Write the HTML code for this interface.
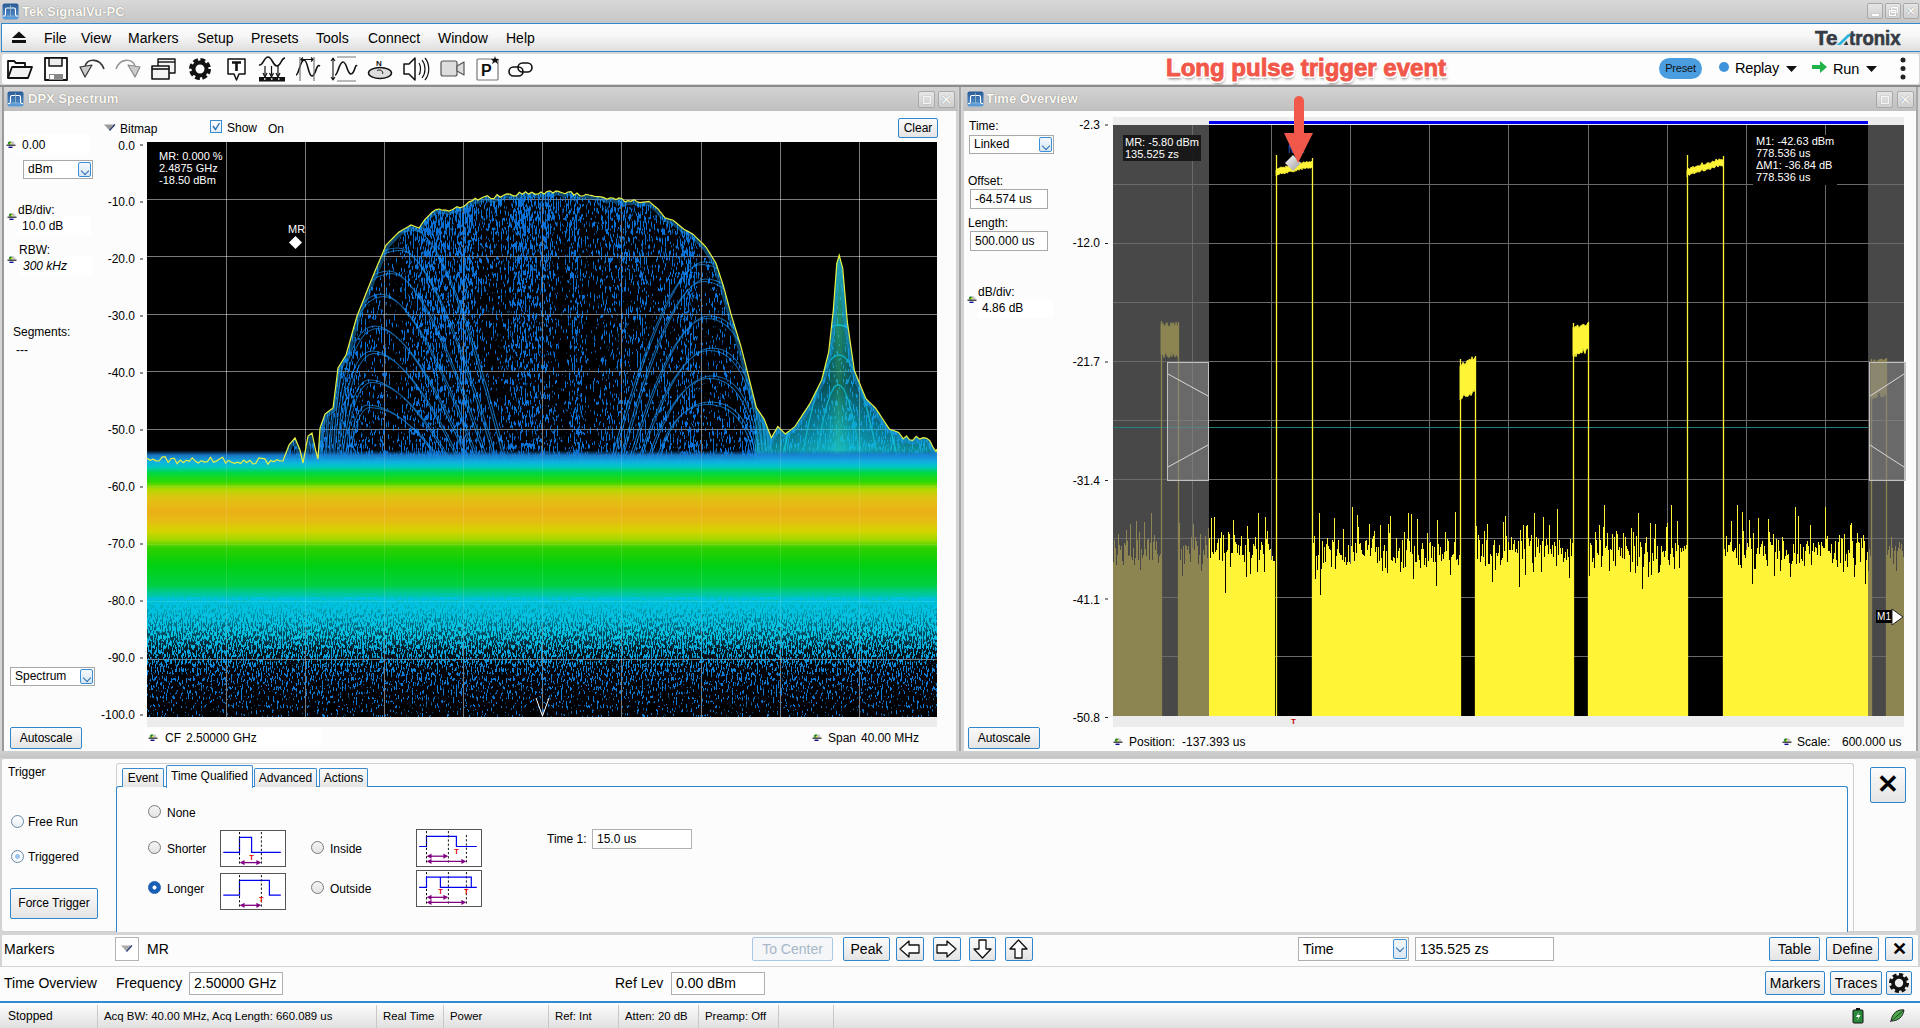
<!DOCTYPE html><html><head><meta charset="utf-8"><style>*{margin:0;padding:0;box-sizing:border-box}
html,body{width:1920px;height:1028px;overflow:hidden;background:#d4d4d4;font-family:"Liberation Sans",sans-serif;color:#000}
.a{position:absolute}
.t{position:absolute;white-space:nowrap;line-height:16px}
svg{position:absolute;overflow:visible}
#title{left:0;top:0;width:1920px;height:23px;background:linear-gradient(#d8d8d8,#c6c6c6)}
#menu{left:1px;top:23px;width:1919px;height:29px;border:1px solid #2f8ad0;border-right:none;background:linear-gradient(#fdfdfd 0%,#f6f6f6 45%,#dedede 100%)}
#tool{left:1px;top:53px;width:1919px;height:32px;background:#fdfdfd;border:1px solid #d8d8d8;border-radius:3px}
.ph{height:24px;background:linear-gradient(#d3d3d3,#bfbfbf)}
.ptitle{color:#fbf9f2;font-weight:bold;font-size:13px;text-shadow:0 0 1px #8a8a8a,0 0 1px #999}
.body{background:#fcfcfc}
.btn{position:absolute;border:1px solid #2f86cc;border-radius:2px;background:linear-gradient(#fbfbfb,#e4e4e4);font-size:13px;text-align:center;line-height:20px;white-space:nowrap}
.fld{position:absolute;border:1px solid #a8a8a8;background:#fff;font-size:13px;line-height:18px;padding-left:4px;white-space:nowrap}
.s11{font-size:11px}.s12{font-size:12px}.s13{font-size:13px}.s14{font-size:14px}.s15{font-size:15px}
.wbtn{position:absolute;border:1px solid #a9a9a9;border-radius:2px;background:linear-gradient(#e6e6e6,#cfcfcf)}
.dd{position:absolute;border:1px solid #a8a8a8;background:#fff;font-size:13px;line-height:17px;padding-left:4px;white-space:nowrap}
.ddb{position:absolute;right:1px;top:1px;bottom:1px;width:13px;border:1px solid #3b8fd6;border-radius:2px;background:linear-gradient(#f4f8fc,#d8e6f2)}
.ddb:after{content:"";position:absolute;left:3px;top:5px;width:5px;height:5px;border-right:1.3px solid #2a6fb0;border-bottom:1.3px solid #2a6fb0;transform:rotate(45deg)}
</style></head><body>
<div id="title" class="a"></div>
<svg style="left:2px;top:3px" width="17" height="17" viewBox="0 0 17 17"><defs><linearGradient id="icg" x1="0" y1="0" x2="0" y2="1"><stop offset="0" stop-color="#2a5a94"/><stop offset="0.75" stop-color="#4a84c4"/><stop offset="0.76" stop-color="#5a9ad8"/><stop offset="1" stop-color="#5a9ad8"/></linearGradient></defs><rect x="0.5" y="0.5" width="16" height="16" rx="2" fill="url(#icg)"/><path d="M1,13 H2.5 Q3.5,13 3.5,10.5 V6.5 Q3.5,5 5,5 H12 Q13.5,5 13.5,6.5 V10.5 Q13.5,13 14.5,13 H16" stroke="#fff" stroke-width="1.1" fill="none"/><path d="M8.5,2 V13 M5,13 H12" stroke="#9bc" stroke-width="0.8"/></svg>
<div class="t ptitle" style="left:22px;top:4px;line-height:16px">Tek SignalVu-PC</div>
<div class="wbtn" style="left:1867px;top:3px;width:16px;height:16px"><div class="a" style="left:4px;top:10px;width:7px;height:2px;background:#fff;box-shadow:0 0 1px #888"></div></div>
<div class="wbtn" style="left:1885px;top:3px;width:16px;height:16px"><div class="a" style="left:5px;top:3px;width:7px;height:6px;border:1px solid #fff;box-shadow:0 0 1px #888"></div><div class="a" style="left:3px;top:6px;width:7px;height:6px;border:1px solid #fff;box-shadow:0 0 1px #888"></div></div>
<div class="wbtn" style="left:1903px;top:3px;width:16px;height:16px;font-size:14px;line-height:14px;color:#fff;text-align:center;text-shadow:0 0 1px #666">&#x2715;</div>
<div id="menu" class="a"></div>
<svg style="left:11px;top:31px" width="16" height="13" viewBox="0 0 16 13"><path d="M8,0.5 L15,7 H1 Z" fill="#111"/><rect x="1" y="9" width="14" height="3" fill="#111"/></svg>
<div class="t s14" style="left:44px;top:30px">File</div>
<div class="t s14" style="left:81px;top:30px">View</div>
<div class="t s14" style="left:128px;top:30px">Markers</div>
<div class="t s14" style="left:197px;top:30px">Setup</div>
<div class="t s14" style="left:251px;top:30px">Presets</div>
<div class="t s14" style="left:316px;top:30px">Tools</div>
<div class="t s14" style="left:368px;top:30px">Connect</div>
<div class="t s14" style="left:438px;top:30px">Window</div>
<div class="t s14" style="left:506px;top:30px">Help</div>
<svg style="left:1810px;top:26px" width="100" height="24" viewBox="1810 26 100 24"><g font-family="Liberation Sans" font-weight="bold" font-size="19.5" fill="#363b44" stroke="#363b44" stroke-width="0.6"><text x="1815" y="44.9" textLength="22.5" lengthAdjust="spacingAndGlyphs">Te</text><text x="1849" y="44.9" textLength="51.6" lengthAdjust="spacingAndGlyphs">tronix</text></g><path d="M1836.8,44.9 L1847.8,34.3 L1851.7,34.3 L1840.6,44.9 Z" fill="#2ab4dc"/><path d="M1843.6,44.9 L1846.4,40.8 L1848.4,44.9 Z" fill="#363b44"/></svg>
<div id="tool" class="a"></div>
<svg style="left:0;top:50px" width="540" height="40" viewBox="0 50 540 40" fill="none" stroke="#111" stroke-width="1.8" stroke-linejoin="round">
<!-- folder -->
<path d="M8,78 V61 H14 L16,63 H25 V67" /><path d="M8,78 L12,67 H32 L28,78 Z" fill="#f2f2f2"/>
<!-- save -->
<rect x="45" y="58" width="22" height="22" fill="#fff"/><rect x="49" y="58" width="13" height="8" fill="#eee" stroke-width="1.5"/><rect x="49" y="74" width="14" height="6" fill="#888" stroke="none"/><rect x="50" y="75" width="4" height="4" fill="#fff" stroke="none"/>
<!-- undo -->
<path d="M104,69 C100,58 88,58 85,66" stroke="#333" stroke-width="1.6"/><path d="M80,67 L92,65 L85,77 Z" fill="#ccc" stroke="#333" stroke-width="1.2"/>
<!-- redo -->
<path d="M116,69 C120,58 132,58 135,66" stroke="#999" stroke-width="1.6"/><path d="M140,67 L128,65 L135,77 Z" fill="#ccc" stroke="#888" stroke-width="1.2"/>
<!-- windows -->
<rect x="158" y="59" width="17" height="14" fill="#f4f4f4" stroke-width="1.4"/><path d="M158,62 H175" stroke-width="1.4"/><rect x="152" y="66" width="17" height="13" fill="#f4f4f4" stroke-width="1.6"/><path d="M152,69 H169" stroke-width="1.6"/>
<!-- gear -->
<g transform="translate(200,69)"><circle r="8.5" stroke-width="5" stroke-dasharray="4.4 2.3"/><circle r="6.5" stroke-width="4"/></g>
<!-- T -->
<path d="M228,59 H245 V74 H239 L236.5,80 L234,74 H228 Z" fill="#fff" stroke-width="1.5"/><path d="M232,62.5 H241 M236.5,62.5 V71" stroke-width="2.6"/>
<!-- spectrum with arrows -->
<path d="M259,65 C263,66 264,57 268,57 C272,57 273,66 277,66 C281,66 281,58 285,58" stroke-width="1.6"/><path d="M265,66 V75 M271.5,66 V75 M278,66 V75" stroke-width="1.2"/><path d="M263,73 L265,77 L267,73 M269.5,73 L271.5,77 L273.5,73 M276,73 L278,77 L280,73" stroke-width="1.2"/><rect x="259" y="77" width="26" height="4.5" fill="#111" stroke="none"/><path d="M264,79 h1.5 M271,79 h1.5 M278,79 h1.5" stroke="#fff" stroke-width="1.5"/>
<!-- wave1 -->
<path d="M296,75 C299,75 300,60 304,60 C308,60 308,76 312,76 C316,76 316,63 320,66" stroke-width="1.6"/><path d="M300,57 V81 M314,57 V81" stroke="#777" stroke-width="1.2"/><path d="M301,59.5 H313 M303,57.5 L301,59.5 L303,61.5 M311,57.5 L313,59.5 L311,61.5" stroke-width="1.1"/>
<!-- wave2 -->
<path d="M335,75 C338,75 339,62 343,62 C347,62 347,74 351,74 C355,74 355,63 357,66" stroke-width="1.6"/><path d="M337,57 H356 M337,81 H356" stroke="#777" stroke-width="1.2"/><path d="M333,58 V80 M331,61 L333,58 L335,61 M331,77 L333,80 L335,77" stroke-width="1.1"/>
<!-- disc -->
<ellipse cx="380" cy="73" rx="11.5" ry="5.5" fill="#ddd" stroke-width="1.5"/><path d="M377,71 C379,68 385,72 382,74" stroke-width="1"/><text x="376" y="66" font-family="Liberation Sans" font-weight="bold" font-size="8" fill="#111" stroke="none">N</text>
<!-- speaker -->
<path d="M404,64 H409 L415,58 V80 L409,74 H404 Z" fill="#fff" stroke-width="1.5"/><path d="M419,63 C421,66 421,72 419,75 M422,60 C426,65 426,73 422,78 M425,58 C430,64 430,74 425,80" stroke-width="1.2"/>
<!-- camera -->
<rect x="441" y="61" width="16" height="15" rx="2" fill="#ddd" stroke="#555" stroke-width="1.2"/><path d="M457,66 L464,62 V75 L457,71 Z" fill="#ddd" stroke="#555" stroke-width="1.2"/>
<!-- P* -->
<rect x="477" y="59" width="21" height="21" rx="1" fill="#fff" stroke="#777" stroke-width="1.2"/><text x="481" y="76" font-family="Liberation Sans" font-weight="bold" font-size="16" fill="#111" stroke="none">P</text><path d="M495,56 L496,59 L499,59 L497,61 L498,64 L495,62 L492,64 L493,61 L491,59 L494,59 Z" fill="#111" stroke="none"/>
<!-- link -->
<rect x="509" y="67" width="14" height="9" rx="4.5" stroke-width="1.6"/><rect x="518" y="63" width="14" height="9" rx="4.5" stroke-width="1.6"/>
</svg>
<!-- annotation -->
<div class="t" style="left:1166px;top:53px;font-size:24px;line-height:30px;font-weight:bold;color:#f2584a;-webkit-text-stroke:0.9px #f2584a;letter-spacing:0px;text-shadow:-2px 0 0 #fff,2px 0 0 #fff,0 -2px 0 #fff,0 2px 0 #fff,-1.5px -1.5px 0 #fff,1.5px -1.5px 0 #fff,-1.5px 1.5px 0 #fff,1.5px 1.5px 0 #fff,1px 3px 3px rgba(0,0,0,0.5)">Long pulse trigger event</div>
<!-- right toolbar -->
<div class="a" style="left:1659px;top:58px;width:43px;height:21px;border-radius:11px;background:#4a9ee0;font-size:11px;line-height:21px;text-align:center;color:#111;letter-spacing:-0.2px">Preset</div>
<div class="a" style="left:1719px;top:62px;width:10px;height:10px;border-radius:50%;background:#3d94dc"></div>
<div class="t" style="left:1735px;top:59px;font-size:14.5px;line-height:18px;letter-spacing:-0.2px">Replay</div>
<svg style="left:1786px;top:65px" width="12" height="8"><path d="M0,1 H11 L5.5,7 Z" fill="#111"/></svg>
<svg style="left:1812px;top:61px" width="16" height="12" viewBox="0 0 16 12"><path d="M0,4 H8 V0 L15,6 L8,12 V8 H0 Z" fill="#22b24a"/></svg>
<div class="t" style="left:1833px;top:60px;font-size:14.5px;line-height:18px;letter-spacing:-0.2px">Run</div>
<svg style="left:1866px;top:65px" width="12" height="8"><path d="M0,1 H11 L5.5,7 Z" fill="#111"/></svg>
<svg style="left:1899px;top:56px" width="8" height="26"><circle cx="4" cy="4" r="2.5" fill="#222"/><circle cx="4" cy="12.5" r="2.5" fill="#222"/><circle cx="4" cy="21" r="2.5" fill="#222"/></svg>
<div class="a" style="left:0;top:85px;width:1920px;height:2px;background:#8c8c8c"></div>
<div class="a" style="left:0;top:87px;width:1920px;height:941px;background:#d4d4d4"></div>
<!-- DPX panel frame -->
<div class="a" style="left:2px;top:87px;width:2px;height:666px;background:#9a9a9a"></div>
<div class="a ph" style="left:4px;top:87px;width:954px"></div>
<svg style="left:7px;top:91px" width="17" height="16" viewBox="0 0 17 16"><rect x="0.5" y="0.5" width="16" height="15" rx="2" fill="url(#icg)"/><path d="M1,12.5 H2.5 Q3.5,12.5 3.5,10 V6 Q3.5,4.5 5,4.5 H12 Q13.5,4.5 13.5,6 V10 Q13.5,12.5 14.5,12.5 H16" stroke="#fff" stroke-width="1.1" fill="none"/><path d="M8.5,2 V12 M5,12 H12" stroke="#9bc" stroke-width="0.8"/></svg>
<div class="t ptitle" style="left:28px;top:91px">DPX Spectrum</div>
<div class="wbtn" style="left:918px;top:91px;width:17px;height:17px"><div class="a" style="left:4px;top:4px;width:8px;height:8px;border:1px solid #f4f4f4;box-shadow:0 0 1px #999"></div></div>
<div class="wbtn" style="left:938px;top:91px;width:17px;height:17px;font-size:15px;line-height:15px;color:#fafafa;text-align:center;text-shadow:0 0 1px #777">&#x2715;</div>
<div class="a body" style="left:4px;top:111px;width:952px;height:640px"></div>
<div class="a" style="left:959px;top:87px;width:2px;height:666px;background:#a6a6a6"></div>
<!-- TOV panel frame -->
<div class="a ph" style="left:963px;top:87px;width:955px"></div>
<svg style="left:967px;top:91px" width="17" height="16" viewBox="0 0 17 16"><rect x="0.5" y="0.5" width="16" height="15" rx="2" fill="url(#icg)"/><path d="M1,12.5 H2.5 Q3.5,12.5 3.5,10 V6 Q3.5,4.5 5,4.5 H12 Q13.5,4.5 13.5,6 V10 Q13.5,12.5 14.5,12.5 H16" stroke="#fff" stroke-width="1.1" fill="none"/><path d="M8.5,2 V12 M5,12 H12" stroke="#9bc" stroke-width="0.8"/></svg>
<div class="t ptitle" style="left:986px;top:91px">Time Overview</div>
<div class="wbtn" style="left:1876px;top:91px;width:17px;height:17px"><div class="a" style="left:4px;top:4px;width:8px;height:8px;border:1px solid #f4f4f4;box-shadow:0 0 1px #999"></div></div>
<div class="wbtn" style="left:1897px;top:91px;width:17px;height:17px;font-size:15px;line-height:15px;color:#fafafa;text-align:center;text-shadow:0 0 1px #777">&#x2715;</div>
<div class="a body" style="left:964px;top:111px;width:952px;height:640px"></div>
<div class="a" style="left:1916px;top:87px;width:2px;height:666px;background:#a6a6a6"></div>
<div class="a" style="left:147px;top:717px;width:790px;height:10px;background:#ececec"></div>
<div class="a" style="left:1113px;top:117px;width:791px;height:8px;background:#ececec"></div>
<div class="a" style="left:1113px;top:716px;width:791px;height:11px;background:#ececec"></div>

<svg style="left:147px;top:142px" width="790" height="575" viewBox="147 142 790 575">
<defs>
<linearGradient id="band" x1="0" y1="450" x2="0" y2="717" gradientUnits="userSpaceOnUse"><stop offset="0.0000" stop-color="#0a5aa0" stop-opacity="0"/><stop offset="0.0187" stop-color="#1a80d8" stop-opacity="0.9"/><stop offset="0.0449" stop-color="#10b0e0" stop-opacity="1"/><stop offset="0.0637" stop-color="#00c8c0" stop-opacity="1"/><stop offset="0.0861" stop-color="#00d840" stop-opacity="1"/><stop offset="0.1199" stop-color="#30d800" stop-opacity="1"/><stop offset="0.1461" stop-color="#b0d800" stop-opacity="1"/><stop offset="0.1723" stop-color="#d8c810" stop-opacity="1"/><stop offset="0.1985" stop-color="#e6bc14" stop-opacity="1"/><stop offset="0.2322" stop-color="#eab016" stop-opacity="1"/><stop offset="0.2659" stop-color="#e6bc14" stop-opacity="1"/><stop offset="0.3034" stop-color="#d4d400" stop-opacity="1"/><stop offset="0.3371" stop-color="#a0d800" stop-opacity="1"/><stop offset="0.3670" stop-color="#30d000" stop-opacity="1"/><stop offset="0.4307" stop-color="#00d010" stop-opacity="1"/><stop offset="0.5056" stop-color="#00d040" stop-opacity="1"/><stop offset="0.5393" stop-color="#00c8a0" stop-opacity="1"/><stop offset="0.5730" stop-color="#00c4d0" stop-opacity="0.95"/><stop offset="0.6554" stop-color="#00b8e0" stop-opacity="0.6"/><stop offset="0.7491" stop-color="#10a0e0" stop-opacity="0.15"/><stop offset="0.8052" stop-color="#1a90e0" stop-opacity="0"/></linearGradient>
<clipPath id="hc"><path d="M147.0,458.2 L150.0,460.3 L153.0,459.1 L156.1,460.8 L159.1,461.0 L162.1,457.1 L165.1,456.7 L168.2,462.5 L171.2,458.5 L174.2,458.3 L177.2,463.7 L180.2,460.0 L183.3,462.6 L186.3,460.1 L189.3,461.3 L192.3,457.9 L195.4,461.3 L198.4,463.0 L201.4,460.6 L204.4,462.1 L207.4,461.6 L210.5,457.4 L213.5,462.3 L216.5,461.1 L219.5,459.1 L222.6,457.3 L225.6,463.1 L228.6,460.4 L231.6,462.2 L234.6,463.3 L237.7,462.2 L240.7,463.6 L243.7,460.0 L246.7,462.8 L249.8,460.4 L252.8,463.8 L255.8,463.5 L258.8,458.0 L261.8,458.3 L264.9,458.9 L267.9,464.1 L270.9,460.5 L273.9,461.8 L277.0,459.6 L280.0,461.0 L283.0,461.0 L286.0,453.0 L289.0,445.0 L292.0,441.5 L295.0,438.0 L300.0,450.0 L303.0,463.0 L308.0,436.0 L312.0,433.0 L316.0,452.0 L318.0,459.0 L320.0,428.0 L325.0,414.0 L329.0,411.0 L333.0,408.0 L336.0,384.0 L338.0,368.0 L342.0,361.5 L346.0,355.0 L349.7,342.0 L353.3,329.0 L357.0,316.0 L360.2,308.0 L363.4,300.0 L366.6,292.0 L369.8,284.0 L373.0,276.0 L376.2,268.2 L379.5,260.5 L382.8,252.8 L386.0,245.0 L389.2,241.8 L392.5,238.5 L395.8,235.2 L399.0,232.0 L402.0,230.2 L405.0,228.5 L408.0,226.8 L411.0,225.0 L415.0,226.5 L419.0,228.0 L422.0,223.5 L425.0,219.4 L428.0,216.3 L432.0,212.3 L436.0,209.6 L439.2,209.0 L442.5,210.2 L445.8,210.2 L449.0,211.0 L453.0,209.2 L457.0,206.7 L460.0,207.8 L463.0,206.7 L466.0,204.8 L469.0,201.9 L472.0,200.9 L475.0,198.2 L478.0,200.0 L481.0,198.3 L484.2,196.8 L487.4,195.6 L490.7,198.4 L493.9,198.6 L497.1,194.7 L500.3,197.2 L503.6,195.3 L506.8,193.9 L510.0,194.2 L513.1,195.8 L516.2,195.9 L519.3,192.3 L522.4,194.3 L525.5,191.7 L528.6,194.1 L531.7,192.2 L534.8,194.1 L537.9,194.2 L541.0,192.0 L544.0,194.1 L547.0,191.5 L550.0,190.8 L553.0,193.0 L556.0,190.9 L559.0,191.7 L562.0,192.7 L565.0,193.7 L568.0,192.0 L571.0,191.7 L574.0,195.2 L577.0,193.1 L580.0,195.8 L583.0,196.0 L586.0,194.3 L589.0,195.0 L592.0,195.6 L595.0,196.5 L598.0,196.7 L601.0,196.9 L604.0,197.6 L607.0,199.2 L610.0,197.9 L613.0,198.0 L616.0,199.5 L619.0,198.0 L622.0,198.7 L625.0,201.9 L628.0,200.6 L631.0,201.3 L634.0,199.6 L637.0,201.7 L640.0,202.6 L643.0,202.2 L646.0,201.8 L649.0,201.4 L652.0,203.9 L655.0,206.5 L658.0,209.0 L661.5,213.4 L665.0,217.8 L669.0,219.1 L673.0,220.3 L676.7,223.3 L680.3,226.2 L684.0,229.2 L687.0,230.9 L690.0,232.5 L693.0,234.2 L696.2,237.4 L699.5,240.6 L702.8,243.8 L706.0,247.0 L709.3,252.4 L712.7,257.9 L716.0,263.3 L719.7,274.6 L723.4,286.0 L727.2,299.9 L731.0,313.9 L734.3,324.8 L737.7,335.8 L741.0,346.7 L744.9,361.9 L748.7,377.0 L752.5,392.2 L756.3,407.4 L760.1,413.1 L764.0,418.8 L767.7,428.2 L771.4,437.7 L774.6,432.0 L777.8,426.4 L781.5,430.2 L785.3,434.0 L788.5,431.6 L791.6,429.1 L794.8,426.7 L797.8,422.0 L800.9,417.4 L803.9,412.7 L807.0,408.1 L810.0,403.4 L813.9,395.6 L817.8,387.8 L821.7,380.0 L825.2,366.0 L828.7,352.0 L833.3,310.0 L836.8,263.3 L839.2,255.2 L842.7,268.0 L847.3,321.7 L850.8,346.2 L854.4,370.7 L858.3,380.0 L862.1,389.4 L866.0,398.7 L869.1,401.8 L872.3,404.9 L875.4,408.0 L878.9,413.2 L882.4,418.5 L885.9,423.8 L889.4,429.0 L892.5,430.2 L895.6,431.3 L898.7,432.5 L903.4,438.9 L906.5,435.9 L909.6,439.8 L912.7,440.3 L916.2,436.3 L919.7,439.1 L923.2,437.6 L926.7,438.3 L929.8,440.6 L932.9,447.0 L936.0,451.4 L937.0,449.0 L937,475 L147,475 Z"/></clipPath>
<filter id="f0" color-interpolation-filters="sRGB" x="147" y="185" width="790" height="45" filterUnits="userSpaceOnUse"><feTurbulence type="fractalNoise" baseFrequency="0.75 0.14" numOctaves="2" seed="4"/><feColorMatrix type="matrix" values="1 0 0 0 0  0 1 0 0 0  0 0 1 0 0  0 0 0 0 1" result="a"/><feTurbulence type="fractalNoise" baseFrequency="0.07 0.002" numOctaves="1" seed="21"/><feColorMatrix type="matrix" values="1 0 0 0 0  0 1 0 0 0  0 0 1 0 0  0 0 0 0 1" result="b"/><feComposite in="a" in2="b" operator="arithmetic" k1="0" k2="0.85" k3="0.32" k4="-0.085"/><feColorMatrix type="matrix" values="0 0 0 0 0.04  0 0 0 0 0.44  0 0 0 0 0.84  18 0 0 0 -9.18"/></filter>
<filter id="f1" color-interpolation-filters="sRGB" x="147" y="230" width="790" height="50" filterUnits="userSpaceOnUse"><feTurbulence type="fractalNoise" baseFrequency="0.75 0.14" numOctaves="2" seed="4"/><feColorMatrix type="matrix" values="1 0 0 0 0  0 1 0 0 0  0 0 1 0 0  0 0 0 0 1" result="a"/><feTurbulence type="fractalNoise" baseFrequency="0.07 0.002" numOctaves="1" seed="21"/><feColorMatrix type="matrix" values="1 0 0 0 0  0 1 0 0 0  0 0 1 0 0  0 0 0 0 1" result="b"/><feComposite in="a" in2="b" operator="arithmetic" k1="0" k2="0.85" k3="0.32" k4="-0.085"/><feColorMatrix type="matrix" values="0 0 0 0 0.04  0 0 0 0 0.44  0 0 0 0 0.84  18 0 0 0 -9.72"/></filter>
<filter id="f2" color-interpolation-filters="sRGB" x="147" y="280" width="790" height="60" filterUnits="userSpaceOnUse"><feTurbulence type="fractalNoise" baseFrequency="0.75 0.14" numOctaves="2" seed="4"/><feColorMatrix type="matrix" values="1 0 0 0 0  0 1 0 0 0  0 0 1 0 0  0 0 0 0 1" result="a"/><feTurbulence type="fractalNoise" baseFrequency="0.07 0.002" numOctaves="1" seed="21"/><feColorMatrix type="matrix" values="1 0 0 0 0  0 1 0 0 0  0 0 1 0 0  0 0 0 0 1" result="b"/><feComposite in="a" in2="b" operator="arithmetic" k1="0" k2="0.85" k3="0.32" k4="-0.085"/><feColorMatrix type="matrix" values="0 0 0 0 0.04  0 0 0 0 0.44  0 0 0 0 0.84  18 0 0 0 -10.17"/></filter>
<filter id="f3" color-interpolation-filters="sRGB" x="147" y="340" width="790" height="60" filterUnits="userSpaceOnUse"><feTurbulence type="fractalNoise" baseFrequency="0.75 0.14" numOctaves="2" seed="4"/><feColorMatrix type="matrix" values="1 0 0 0 0  0 1 0 0 0  0 0 1 0 0  0 0 0 0 1" result="a"/><feTurbulence type="fractalNoise" baseFrequency="0.07 0.002" numOctaves="1" seed="21"/><feColorMatrix type="matrix" values="1 0 0 0 0  0 1 0 0 0  0 0 1 0 0  0 0 0 0 1" result="b"/><feComposite in="a" in2="b" operator="arithmetic" k1="0" k2="0.85" k3="0.32" k4="-0.085"/><feColorMatrix type="matrix" values="0 0 0 0 0.04  0 0 0 0 0.44  0 0 0 0 0.84  18 0 0 0 -10.35"/></filter>
<filter id="f4" color-interpolation-filters="sRGB" x="147" y="400" width="790" height="40" filterUnits="userSpaceOnUse"><feTurbulence type="fractalNoise" baseFrequency="0.75 0.14" numOctaves="2" seed="4"/><feColorMatrix type="matrix" values="1 0 0 0 0  0 1 0 0 0  0 0 1 0 0  0 0 0 0 1" result="a"/><feTurbulence type="fractalNoise" baseFrequency="0.07 0.002" numOctaves="1" seed="21"/><feColorMatrix type="matrix" values="1 0 0 0 0  0 1 0 0 0  0 0 1 0 0  0 0 0 0 1" result="b"/><feComposite in="a" in2="b" operator="arithmetic" k1="0" k2="0.85" k3="0.32" k4="-0.085"/><feColorMatrix type="matrix" values="0 0 0 0 0.04  0 0 0 0 0.44  0 0 0 0 0.84  18 0 0 0 -10.08"/></filter>
<filter id="f5" color-interpolation-filters="sRGB" x="147" y="440" width="790" height="35" filterUnits="userSpaceOnUse"><feTurbulence type="fractalNoise" baseFrequency="0.75 0.14" numOctaves="2" seed="4"/><feColorMatrix type="matrix" values="1 0 0 0 0  0 1 0 0 0  0 0 1 0 0  0 0 0 0 1" result="a"/><feTurbulence type="fractalNoise" baseFrequency="0.07 0.002" numOctaves="1" seed="21"/><feColorMatrix type="matrix" values="1 0 0 0 0  0 1 0 0 0  0 0 1 0 0  0 0 0 0 1" result="b"/><feComposite in="a" in2="b" operator="arithmetic" k1="0" k2="0.85" k3="0.32" k4="-0.085"/><feColorMatrix type="matrix" values="0 0 0 0 0.04  0 0 0 0 0.44  0 0 0 0 0.84  18 0 0 0 -9.54"/></filter>
<filter id="f20" color-interpolation-filters="sRGB" x="147" y="597" width="790" height="8" filterUnits="userSpaceOnUse"><feTurbulence type="fractalNoise" baseFrequency="0.8 0.22" numOctaves="2" seed="9"/><feColorMatrix type="matrix" values="0 0 0 0 0.0  0 0 0 0 0.76  0 0 0 0 0.88  18 0 0 0 -6.84"/></filter>
<filter id="f21" color-interpolation-filters="sRGB" x="147" y="605" width="790" height="9" filterUnits="userSpaceOnUse"><feTurbulence type="fractalNoise" baseFrequency="0.8 0.22" numOctaves="2" seed="9"/><feColorMatrix type="matrix" values="0 0 0 0 0.0  0 0 0 0 0.76  0 0 0 0 0.88  18 0 0 0 -7.20"/></filter>
<filter id="f22" color-interpolation-filters="sRGB" x="147" y="614" width="790" height="8" filterUnits="userSpaceOnUse"><feTurbulence type="fractalNoise" baseFrequency="0.8 0.22" numOctaves="2" seed="9"/><feColorMatrix type="matrix" values="0 0 0 0 0.0  0 0 0 0 0.76  0 0 0 0 0.88  18 0 0 0 -7.56"/></filter>
<filter id="f23" color-interpolation-filters="sRGB" x="147" y="622" width="790" height="9" filterUnits="userSpaceOnUse"><feTurbulence type="fractalNoise" baseFrequency="0.8 0.22" numOctaves="2" seed="9"/><feColorMatrix type="matrix" values="0 0 0 0 0.0  0 0 0 0 0.76  0 0 0 0 0.88  18 0 0 0 -7.92"/></filter>
<filter id="f24" color-interpolation-filters="sRGB" x="147" y="631" width="790" height="8" filterUnits="userSpaceOnUse"><feTurbulence type="fractalNoise" baseFrequency="0.8 0.22" numOctaves="2" seed="9"/><feColorMatrix type="matrix" values="0 0 0 0 0.0  0 0 0 0 0.76  0 0 0 0 0.88  18 0 0 0 -8.28"/></filter>
<filter id="f25" color-interpolation-filters="sRGB" x="147" y="639" width="790" height="9" filterUnits="userSpaceOnUse"><feTurbulence type="fractalNoise" baseFrequency="0.8 0.22" numOctaves="2" seed="9"/><feColorMatrix type="matrix" values="0 0 0 0 0.012230769230769283  0 0 0 0 0.7029230769230767  0 0 0 0 0.8718461538461538  18 0 0 0 -8.64"/></filter>
<filter id="f26" color-interpolation-filters="sRGB" x="147" y="648" width="790" height="9" filterUnits="userSpaceOnUse"><feTurbulence type="fractalNoise" baseFrequency="0.8 0.22" numOctaves="2" seed="9"/><feColorMatrix type="matrix" values="0 0 0 0 0.026076923076923036  0 0 0 0 0.6383076923076925  0 0 0 0 0.8626153846153847  18 0 0 0 -9.00"/></filter>
<filter id="f27" color-interpolation-filters="sRGB" x="147" y="657" width="790" height="8" filterUnits="userSpaceOnUse"><feTurbulence type="fractalNoise" baseFrequency="0.8 0.22" numOctaves="2" seed="9"/><feColorMatrix type="matrix" values="0 0 0 0 0.03992307692307696  0 0 0 0 0.5736923076923075  0 0 0 0 0.8533846153846154  18 0 0 0 -9.36"/></filter>
<filter id="f28" color-interpolation-filters="sRGB" x="147" y="665" width="790" height="9" filterUnits="userSpaceOnUse"><feTurbulence type="fractalNoise" baseFrequency="0.8 0.22" numOctaves="2" seed="9"/><feColorMatrix type="matrix" values="0 0 0 0 0.053769230769230715  0 0 0 0 0.5090769230769233  0 0 0 0 0.8441538461538461  18 0 0 0 -9.72"/></filter>
<filter id="f29" color-interpolation-filters="sRGB" x="147" y="674" width="790" height="8" filterUnits="userSpaceOnUse"><feTurbulence type="fractalNoise" baseFrequency="0.8 0.22" numOctaves="2" seed="9"/><feColorMatrix type="matrix" values="0 0 0 0 0.06  0 0 0 0 0.48  0 0 0 0 0.84  18 0 0 0 -10.08"/></filter>
<filter id="f30" color-interpolation-filters="sRGB" x="147" y="682" width="790" height="9" filterUnits="userSpaceOnUse"><feTurbulence type="fractalNoise" baseFrequency="0.8 0.22" numOctaves="2" seed="9"/><feColorMatrix type="matrix" values="0 0 0 0 0.06  0 0 0 0 0.48  0 0 0 0 0.84  18 0 0 0 -10.44"/></filter>
<filter id="f31" color-interpolation-filters="sRGB" x="147" y="691" width="790" height="8" filterUnits="userSpaceOnUse"><feTurbulence type="fractalNoise" baseFrequency="0.8 0.22" numOctaves="2" seed="9"/><feColorMatrix type="matrix" values="0 0 0 0 0.06  0 0 0 0 0.48  0 0 0 0 0.84  18 0 0 0 -10.80"/></filter>
<filter id="f32" color-interpolation-filters="sRGB" x="147" y="699" width="790" height="9" filterUnits="userSpaceOnUse"><feTurbulence type="fractalNoise" baseFrequency="0.8 0.22" numOctaves="2" seed="9"/><feColorMatrix type="matrix" values="0 0 0 0 0.06  0 0 0 0 0.48  0 0 0 0 0.84  18 0 0 0 -11.16"/></filter>
<filter id="f33" color-interpolation-filters="sRGB" x="147" y="708" width="790" height="9" filterUnits="userSpaceOnUse"><feTurbulence type="fractalNoise" baseFrequency="0.8 0.22" numOctaves="2" seed="9"/><feColorMatrix type="matrix" values="0 0 0 0 0.06  0 0 0 0 0.48  0 0 0 0 0.84  18 0 0 0 -11.52"/></filter>
<linearGradient id="pk" x1="760" y1="0" x2="937" y2="0" gradientUnits="userSpaceOnUse"><stop offset="0" stop-color="#10a0d8" stop-opacity="0.15"/><stop offset="0.2" stop-color="#10b0e0" stop-opacity="0.45"/><stop offset="0.38" stop-color="#10c0d8" stop-opacity="0.7"/><stop offset="0.445" stop-color="#30d0a0" stop-opacity="0.9"/><stop offset="0.52" stop-color="#10c0d8" stop-opacity="0.7"/><stop offset="0.7" stop-color="#10b0e0" stop-opacity="0.45"/><stop offset="1" stop-color="#10a0d8" stop-opacity="0.2"/></linearGradient><linearGradient id="pkv" x1="0" y1="250" x2="0" y2="475" gradientUnits="userSpaceOnUse"><stop offset="0" stop-color="#fff" stop-opacity="0.9"/><stop offset="0.6" stop-color="#fff" stop-opacity="0.6"/><stop offset="1" stop-color="#fff" stop-opacity="1"/></linearGradient><mask id="pkm" maskUnits="userSpaceOnUse" x="740" y="240" width="200" height="240"><rect x="740" y="240" width="200" height="240" fill="url(#pkv)"/></mask><linearGradient id="skv" x1="0" y1="385" x2="0" y2="470" gradientUnits="userSpaceOnUse"><stop offset="0" stop-color="#10c0e0" stop-opacity="0"/><stop offset="0.6" stop-color="#10c0e0" stop-opacity="0.45"/><stop offset="1" stop-color="#20d0c0" stop-opacity="0.85"/></linearGradient></defs>
<rect x="147" y="142" width="790" height="575" fill="#000"/>
<path d="M226.5,142 V717 M305.5,142 V717 M384.5,142 V717 M463.5,142 V717 M542.5,142 V717 M621.5,142 V717 M701.5,142 V717 M780.5,142 V717 M859.5,142 V717 M147,199.5 H937 M147,256.5 H937 M147,314.5 H937 M147,371.5 H937 M147,429.5 H937 M147,486.5 H937 M147,544.5 H937 M147,601.5 H937 M147,659.5 H937" stroke="#fff" stroke-width="1" fill="none" stroke-opacity="0.41"/>
<g clip-path="url(#hc)"><rect x="147" y="185" width="790" height="45" filter="url(#f0)"/><rect x="147" y="230" width="790" height="50" filter="url(#f1)"/><rect x="147" y="280" width="790" height="60" filter="url(#f2)"/><rect x="147" y="340" width="790" height="60" filter="url(#f3)"/><rect x="147" y="400" width="790" height="40" filter="url(#f4)"/><rect x="147" y="440" width="790" height="35" filter="url(#f5)"/></g>
<g clip-path="url(#hc)"><path d="M318,465 Q326,228 411,228 Q446,228 505,465 M320.5,465 Q328.5,230.5 413.5,230.5 Q448.5,230.5 507.5,465 M322,465 Q330,248 398,248 Q433,248 496,465 M324.5,465 Q332.5,250.5 400.5,250.5 Q435.5,250.5 498.5,465 M326,465 Q334,271 389,271 Q424,271 487,465 M328.5,465 Q336.5,273.5 391.5,273.5 Q426.5,273.5 489.5,465 M330,465 Q338,294 381,294 Q416,294 478,465 M332.5,465 Q340.5,296.5 383.5,296.5 Q418.5,296.5 480.5,465 M334,465 Q342,326 375,326 Q410,326 469,465 M336.5,465 Q344.5,328.5 377.5,328.5 Q412.5,328.5 471.5,465 M338,465 Q346,351 372,351 Q407,351 460,465 M340.5,465 Q348.5,353.5 374.5,353.5 Q409.5,353.5 462.5,465 M342,465 Q350,380 369,380 Q404,380 451,465 M344.5,465 Q352.5,382.5 371.5,382.5 Q406.5,382.5 453.5,465 M346,465 Q354,405 367,405 Q402,405 442,465 M348.5,465 Q356.5,407.5 369.5,407.5 Q404.5,407.5 444.5,465 M612,465 Q669,262 704,262 Q764,262 772,465 M609.5,465 Q666.5,264.5 701.5,264.5 Q761.5,264.5 769.5,465 M621,465 Q671,279 706,279 Q761,279 769,465 M618.5,465 Q668.5,281.5 703.5,281.5 Q758.5,281.5 766.5,465 M630,465 Q674,316 709,316 Q758,316 766,465 M627.5,465 Q671.5,318.5 706.5,318.5 Q755.5,318.5 763.5,465 M639,465 Q677,348 712,348 Q755,348 763,465 M636.5,465 Q674.5,350.5 709.5,350.5 Q752.5,350.5 760.5,465 M648,465 Q677,376 712,376 Q752,376 760,465 M645.5,465 Q674.5,378.5 709.5,378.5 Q749.5,378.5 757.5,465 M657,465 Q675,402 710,402 Q749,402 757,465 M654.5,465 Q672.5,404.5 707.5,404.5 Q746.5,404.5 754.5,465" stroke="#1a8ef0" stroke-width="1.2" fill="none" stroke-opacity="0.7"/></g>
<g clip-path="url(#hc)"><rect x="762" y="250" width="175" height="225" fill="url(#pk)" mask="url(#pkm)"/></g>
<g clip-path="url(#hc)"><rect x="755" y="385" width="182" height="90" fill="url(#skv)"/></g>
<g clip-path="url(#hc)"><path d="M780,470 Q838,180 900,470" stroke="#10c0d0" stroke-width="1.5" fill="none"/><path d="M800,470 Q838,240 880,470 M815,470 Q838,300 862,470" stroke="#10b0c8" stroke-width="1.4" fill="none"/></g>
<path d="M147.0,458.2 L150.0,460.3 L153.0,459.1 L156.1,460.8 L159.1,461.0 L162.1,457.1 L165.1,456.7 L168.2,462.5 L171.2,458.5 L174.2,458.3 L177.2,463.7 L180.2,460.0 L183.3,462.6 L186.3,460.1 L189.3,461.3 L192.3,457.9 L195.4,461.3 L198.4,463.0 L201.4,460.6 L204.4,462.1 L207.4,461.6 L210.5,457.4 L213.5,462.3 L216.5,461.1 L219.5,459.1 L222.6,457.3 L225.6,463.1 L228.6,460.4 L231.6,462.2 L234.6,463.3 L237.7,462.2 L240.7,463.6 L243.7,460.0 L246.7,462.8 L249.8,460.4 L252.8,463.8 L255.8,463.5 L258.8,458.0 L261.8,458.3 L264.9,458.9 L267.9,464.1 L270.9,460.5 L273.9,461.8 L277.0,459.6 L280.0,461.0 L283.0,461.0 L286.0,453.0 L289.0,445.0 L292.0,441.5 L295.0,438.0 L300.0,450.0 L303.0,463.0 L308.0,436.0 L312.0,433.0 L316.0,452.0 L318.0,459.0 L320.0,428.0 L325.0,414.0 L329.0,411.0 L333.0,408.0 L336.0,384.0 L338.0,368.0 L342.0,361.5 L346.0,355.0 L349.7,342.0 L353.3,329.0 L357.0,316.0 L360.2,308.0 L363.4,300.0 L366.6,292.0 L369.8,284.0 L373.0,276.0 L376.2,268.2 L379.5,260.5 L382.8,252.8 L386.0,245.0 L389.2,241.8 L392.5,238.5 L395.8,235.2 L399.0,232.0 L402.0,230.2 L405.0,228.5 L408.0,226.8 L411.0,225.0 L415.0,226.5 L419.0,228.0 L422.0,223.5 L425.0,219.4 L428.0,216.3 L432.0,212.3 L436.0,209.6 L439.2,209.0 L442.5,210.2 L445.8,210.2 L449.0,211.0 L453.0,209.2 L457.0,206.7 L460.0,207.8 L463.0,206.7 L466.0,204.8 L469.0,201.9 L472.0,200.9 L475.0,198.2 L478.0,200.0 L481.0,198.3 L484.2,196.8 L487.4,195.6 L490.7,198.4 L493.9,198.6 L497.1,194.7 L500.3,197.2 L503.6,195.3 L506.8,193.9 L510.0,194.2 L513.1,195.8 L516.2,195.9 L519.3,192.3 L522.4,194.3 L525.5,191.7 L528.6,194.1 L531.7,192.2 L534.8,194.1 L537.9,194.2 L541.0,192.0 L544.0,194.1 L547.0,191.5 L550.0,190.8 L553.0,193.0 L556.0,190.9 L559.0,191.7 L562.0,192.7 L565.0,193.7 L568.0,192.0 L571.0,191.7 L574.0,195.2 L577.0,193.1 L580.0,195.8 L583.0,196.0 L586.0,194.3 L589.0,195.0 L592.0,195.6 L595.0,196.5 L598.0,196.7 L601.0,196.9 L604.0,197.6 L607.0,199.2 L610.0,197.9 L613.0,198.0 L616.0,199.5 L619.0,198.0 L622.0,198.7 L625.0,201.9 L628.0,200.6 L631.0,201.3 L634.0,199.6 L637.0,201.7 L640.0,202.6 L643.0,202.2 L646.0,201.8 L649.0,201.4 L652.0,203.9 L655.0,206.5 L658.0,209.0 L661.5,213.4 L665.0,217.8 L669.0,219.1 L673.0,220.3 L676.7,223.3 L680.3,226.2 L684.0,229.2 L687.0,230.9 L690.0,232.5 L693.0,234.2 L696.2,237.4 L699.5,240.6 L702.8,243.8 L706.0,247.0 L709.3,252.4 L712.7,257.9 L716.0,263.3 L719.7,274.6 L723.4,286.0 L727.2,299.9 L731.0,313.9 L734.3,324.8 L737.7,335.8 L741.0,346.7 L744.9,361.9 L748.7,377.0 L752.5,392.2 L756.3,407.4 L760.1,413.1 L764.0,418.8 L767.7,428.2 L771.4,437.7 L774.6,432.0 L777.8,426.4 L781.5,430.2 L785.3,434.0 L788.5,431.6 L791.6,429.1 L794.8,426.7 L797.8,422.0 L800.9,417.4 L803.9,412.7 L807.0,408.1 L810.0,403.4 L813.9,395.6 L817.8,387.8 L821.7,380.0 L825.2,366.0 L828.7,352.0 L833.3,310.0 L836.8,263.3 L839.2,255.2 L842.7,268.0 L847.3,321.7 L850.8,346.2 L854.4,370.7 L858.3,380.0 L862.1,389.4 L866.0,398.7 L869.1,401.8 L872.3,404.9 L875.4,408.0 L878.9,413.2 L882.4,418.5 L885.9,423.8 L889.4,429.0 L892.5,430.2 L895.6,431.3 L898.7,432.5 L903.4,438.9 L906.5,435.9 L909.6,439.8 L912.7,440.3 L916.2,436.3 L919.7,439.1 L923.2,437.6 L926.7,438.3 L929.8,440.6 L932.9,447.0 L936.0,451.4 L937.0,449.0 L937,475 L147,475 Z" fill="none" stroke="#1a98e8" stroke-width="8" stroke-opacity="0.45" clip-path="url(#hc)"/>
<rect x="147" y="450" width="790" height="267" fill="url(#band)"/>
<rect x="147" y="597" width="790" height="8" filter="url(#f20)"/><rect x="147" y="605" width="790" height="9" filter="url(#f21)"/><rect x="147" y="614" width="790" height="8" filter="url(#f22)"/><rect x="147" y="622" width="790" height="9" filter="url(#f23)"/><rect x="147" y="631" width="790" height="8" filter="url(#f24)"/><rect x="147" y="639" width="790" height="9" filter="url(#f25)"/><rect x="147" y="648" width="790" height="9" filter="url(#f26)"/><rect x="147" y="657" width="790" height="8" filter="url(#f27)"/><rect x="147" y="665" width="790" height="9" filter="url(#f28)"/><rect x="147" y="674" width="790" height="8" filter="url(#f29)"/><rect x="147" y="682" width="790" height="9" filter="url(#f30)"/><rect x="147" y="691" width="790" height="8" filter="url(#f31)"/><rect x="147" y="699" width="790" height="9" filter="url(#f32)"/><rect x="147" y="708" width="790" height="9" filter="url(#f33)"/>
<path d="M226.5,142 V717 M305.5,142 V717 M384.5,142 V717 M463.5,142 V717 M542.5,142 V717 M621.5,142 V717 M701.5,142 V717 M780.5,142 V717 M859.5,142 V717 M147,199.5 H937 M147,256.5 H937 M147,314.5 H937 M147,371.5 H937 M147,429.5 H937 M147,486.5 H937 M147,544.5 H937 M147,601.5 H937 M147,659.5 H937" stroke="#fff" stroke-width="1" fill="none" stroke-opacity="0.12"/>
<path d="M147.0,458.2 L150.0,460.3 L153.0,459.1 L156.1,460.8 L159.1,461.0 L162.1,457.1 L165.1,456.7 L168.2,462.5 L171.2,458.5 L174.2,458.3 L177.2,463.7 L180.2,460.0 L183.3,462.6 L186.3,460.1 L189.3,461.3 L192.3,457.9 L195.4,461.3 L198.4,463.0 L201.4,460.6 L204.4,462.1 L207.4,461.6 L210.5,457.4 L213.5,462.3 L216.5,461.1 L219.5,459.1 L222.6,457.3 L225.6,463.1 L228.6,460.4 L231.6,462.2 L234.6,463.3 L237.7,462.2 L240.7,463.6 L243.7,460.0 L246.7,462.8 L249.8,460.4 L252.8,463.8 L255.8,463.5 L258.8,458.0 L261.8,458.3 L264.9,458.9 L267.9,464.1 L270.9,460.5 L273.9,461.8 L277.0,459.6 L280.0,461.0 L283.0,461.0 L286.0,453.0 L289.0,445.0 L292.0,441.5 L295.0,438.0 L300.0,450.0 L303.0,463.0 L308.0,436.0 L312.0,433.0 L316.0,452.0 L318.0,459.0 L320.0,428.0 L325.0,414.0 L329.0,411.0 L333.0,408.0 L336.0,384.0 L338.0,368.0 L342.0,361.5 L346.0,355.0 L349.7,342.0 L353.3,329.0 L357.0,316.0 L360.2,308.0 L363.4,300.0 L366.6,292.0 L369.8,284.0 L373.0,276.0 L376.2,268.2 L379.5,260.5 L382.8,252.8 L386.0,245.0 L389.2,241.8 L392.5,238.5 L395.8,235.2 L399.0,232.0 L402.0,230.2 L405.0,228.5 L408.0,226.8 L411.0,225.0 L415.0,226.5 L419.0,228.0 L422.0,223.5 L425.0,219.4 L428.0,216.3 L432.0,212.3 L436.0,209.6 L439.2,209.0 L442.5,210.2 L445.8,210.2 L449.0,211.0 L453.0,209.2 L457.0,206.7 L460.0,207.8 L463.0,206.7 L466.0,204.8 L469.0,201.9 L472.0,200.9 L475.0,198.2 L478.0,200.0 L481.0,198.3 L484.2,196.8 L487.4,195.6 L490.7,198.4 L493.9,198.6 L497.1,194.7 L500.3,197.2 L503.6,195.3 L506.8,193.9 L510.0,194.2 L513.1,195.8 L516.2,195.9 L519.3,192.3 L522.4,194.3 L525.5,191.7 L528.6,194.1 L531.7,192.2 L534.8,194.1 L537.9,194.2 L541.0,192.0 L544.0,194.1 L547.0,191.5 L550.0,190.8 L553.0,193.0 L556.0,190.9 L559.0,191.7 L562.0,192.7 L565.0,193.7 L568.0,192.0 L571.0,191.7 L574.0,195.2 L577.0,193.1 L580.0,195.8 L583.0,196.0 L586.0,194.3 L589.0,195.0 L592.0,195.6 L595.0,196.5 L598.0,196.7 L601.0,196.9 L604.0,197.6 L607.0,199.2 L610.0,197.9 L613.0,198.0 L616.0,199.5 L619.0,198.0 L622.0,198.7 L625.0,201.9 L628.0,200.6 L631.0,201.3 L634.0,199.6 L637.0,201.7 L640.0,202.6 L643.0,202.2 L646.0,201.8 L649.0,201.4 L652.0,203.9 L655.0,206.5 L658.0,209.0 L661.5,213.4 L665.0,217.8 L669.0,219.1 L673.0,220.3 L676.7,223.3 L680.3,226.2 L684.0,229.2 L687.0,230.9 L690.0,232.5 L693.0,234.2 L696.2,237.4 L699.5,240.6 L702.8,243.8 L706.0,247.0 L709.3,252.4 L712.7,257.9 L716.0,263.3 L719.7,274.6 L723.4,286.0 L727.2,299.9 L731.0,313.9 L734.3,324.8 L737.7,335.8 L741.0,346.7 L744.9,361.9 L748.7,377.0 L752.5,392.2 L756.3,407.4 L760.1,413.1 L764.0,418.8 L767.7,428.2 L771.4,437.7 L774.6,432.0 L777.8,426.4 L781.5,430.2 L785.3,434.0 L788.5,431.6 L791.6,429.1 L794.8,426.7 L797.8,422.0 L800.9,417.4 L803.9,412.7 L807.0,408.1 L810.0,403.4 L813.9,395.6 L817.8,387.8 L821.7,380.0 L825.2,366.0 L828.7,352.0 L833.3,310.0 L836.8,263.3 L839.2,255.2 L842.7,268.0 L847.3,321.7 L850.8,346.2 L854.4,370.7 L858.3,380.0 L862.1,389.4 L866.0,398.7 L869.1,401.8 L872.3,404.9 L875.4,408.0 L878.9,413.2 L882.4,418.5 L885.9,423.8 L889.4,429.0 L892.5,430.2 L895.6,431.3 L898.7,432.5 L903.4,438.9 L906.5,435.9 L909.6,439.8 L912.7,440.3 L916.2,436.3 L919.7,439.1 L923.2,437.6 L926.7,438.3 L929.8,440.6 L932.9,447.0 L936.0,451.4 L937.0,449.0" stroke="#e8f040" stroke-width="1.2" fill="none"/>
</svg>
<svg style="left:1113px;top:125px" width="791" height="591" viewBox="1113 125 791 591">
<rect x="1113" y="125" width="791" height="591" fill="#000"/>
<rect x="1113" y="125" width="96" height="591" fill="#484848"/>
<rect x="1868" y="125" width="36" height="591" fill="#484848"/>
<path d="M1192.5,125 V716 M1271.5,125 V716 M1350.5,125 V716 M1429.5,125 V716 M1508.5,125 V716 M1588.5,125 V716 M1667.5,125 V716 M1746.5,125 V716 M1825.5,125 V716 M1113,184.5 H1904 M1113,243.5 H1904 M1113,302.5 H1904 M1113,361.5 H1904 M1113,420.5 H1904 M1113,479.5 H1904 M1113,538.5 H1904 M1113,597.5 H1904 M1113,656.5 H1904" stroke="#6a6a6a" stroke-width="1" fill="none"/>
<path d="M1113,427.5 H1868" stroke="#23807f" stroke-width="1" fill="none"/>
<path d="M1209.5,716V538M1210.5,716V558M1211.5,716V518M1212.5,716V552M1213.5,716V554M1214.5,716V517M1215.5,716V552M1216.5,716V550M1217.5,716V543M1218.5,716V539M1219.5,716V560M1220.5,716V538M1221.5,716V532M1222.5,716V561M1223.5,716V535M1224.5,716V553M1225.5,716V593M1226.5,716V552M1227.5,716V550M1228.5,716V532M1229.5,716V534M1230.5,716V567M1231.5,716V553M1232.5,716V553M1233.5,716V520M1234.5,716V535M1235.5,716V542M1236.5,716V544M1237.5,716V553M1238.5,716V545M1239.5,716V555M1240.5,716V546M1241.5,716V536M1242.5,716V555M1243.5,716V555M1244.5,716V562M1245.5,716V545M1246.5,716V577M1247.5,716V526M1248.5,716V539M1249.5,716V552M1250.5,716V574M1251.5,716V558M1252.5,716V555M1253.5,716V544M1254.5,716V546M1255.5,716V537M1256.5,716V549M1257.5,716V572M1258.5,716V513M1259.5,716V560M1260.5,716V550M1261.5,716V542M1262.5,716V545M1263.5,716V554M1264.5,716V572M1265.5,716V517M1266.5,716V539M1267.5,716V531M1268.5,716V544M1269.5,716V550M1270.5,716V549M1271.5,716V560M1272.5,716V556M1273.5,716V561M1274.5,716V561" stroke="#fff536" stroke-width="1" shape-rendering="crispEdges"/><rect x="1209" y="600" width="66" height="116" fill="#fff536"/>
<path d="M1313.5,716V543M1314.5,716V536M1315.5,716V579M1316.5,716V556M1317.5,716V570M1318.5,716V555M1319.5,716V513M1320.5,716V595M1321.5,716V569M1322.5,716V541M1323.5,716V563M1324.5,716V547M1325.5,716V562M1326.5,716V544M1327.5,716V538M1328.5,716V546M1329.5,716V549M1330.5,716V550M1331.5,716V567M1332.5,716V540M1333.5,716V542M1334.5,716V518M1335.5,716V569M1336.5,716V556M1337.5,716V549M1338.5,716V540M1339.5,716V553M1340.5,716V555M1341.5,716V555M1342.5,716V560M1343.5,716V529M1344.5,716V562M1345.5,716V557M1346.5,716V565M1347.5,716V562M1348.5,716V545M1349.5,716V562M1350.5,716V564M1351.5,716V546M1352.5,716V507M1353.5,716V552M1354.5,716V561M1355.5,716V543M1356.5,716V553M1357.5,716V515M1358.5,716V527M1359.5,716V544M1360.5,716V543M1361.5,716V550M1362.5,716V554M1363.5,716V555M1364.5,716V556M1365.5,716V541M1366.5,716V540M1367.5,716V550M1368.5,716V545M1369.5,716V524M1370.5,716V556M1371.5,716V548M1372.5,716V539M1373.5,716V536M1374.5,716V531M1375.5,716V552M1376.5,716V547M1377.5,716V563M1378.5,716V547M1379.5,716V561M1380.5,716V525M1381.5,716V558M1382.5,716V571M1383.5,716V551M1384.5,716V545M1385.5,716V568M1386.5,716V551M1387.5,716V573M1388.5,716V524M1389.5,716V533M1390.5,716V516M1391.5,716V560M1392.5,716V561M1393.5,716V557M1394.5,716V558M1395.5,716V563M1396.5,716V538M1397.5,716V558M1398.5,716V551M1399.5,716V548M1400.5,716V572M1401.5,716V562M1402.5,716V540M1403.5,716V568M1404.5,716V532M1405.5,716V567M1406.5,716V550M1407.5,716V539M1408.5,716V513M1409.5,716V541M1410.5,716V552M1411.5,716V514M1412.5,716V554M1413.5,716V579M1414.5,716V546M1415.5,716V562M1416.5,716V562M1417.5,716V519M1418.5,716V555M1419.5,716V560M1420.5,716V568M1421.5,716V549M1422.5,716V543M1423.5,716V549M1424.5,716V565M1425.5,716V558M1426.5,716V567M1427.5,716V533M1428.5,716V561M1429.5,716V543M1430.5,716V542M1431.5,716V558M1432.5,716V546M1433.5,716V562M1434.5,716V547M1435.5,716V562M1436.5,716V586M1437.5,716V520M1438.5,716V544M1439.5,716V555M1440.5,716V547M1441.5,716V561M1442.5,716V554M1443.5,716V559M1444.5,716V552M1445.5,716V532M1446.5,716V551M1447.5,716V539M1448.5,716V541M1449.5,716V560M1450.5,716V575M1451.5,716V557M1452.5,716V555M1453.5,716V554M1454.5,716V542M1455.5,716V512M1456.5,716V560M1457.5,716V559M1458.5,716V565M1459.5,716V555" stroke="#fff536" stroke-width="1" shape-rendering="crispEdges"/><rect x="1313" y="600" width="147" height="116" fill="#fff536"/>
<path d="M1476.5,716V526M1477.5,716V559M1478.5,716V535M1479.5,716V540M1480.5,716V562M1481.5,716V556M1482.5,716V544M1483.5,716V557M1484.5,716V531M1485.5,716V566M1486.5,716V540M1487.5,716V524M1488.5,716V564M1489.5,716V564M1490.5,716V554M1491.5,716V556M1492.5,716V582M1493.5,716V545M1494.5,716V540M1495.5,716V570M1496.5,716V553M1497.5,716V556M1498.5,716V553M1499.5,716V545M1500.5,716V565M1501.5,716V560M1502.5,716V558M1503.5,716V522M1504.5,716V551M1505.5,716V516M1506.5,716V536M1507.5,716V562M1508.5,716V542M1509.5,716V550M1510.5,716V550M1511.5,716V537M1512.5,716V550M1513.5,716V544M1514.5,716V540M1515.5,716V552M1516.5,716V549M1517.5,716V553M1518.5,716V541M1519.5,716V587M1520.5,716V530M1521.5,716V541M1522.5,716V559M1523.5,716V525M1524.5,716V549M1525.5,716V575M1526.5,716V526M1527.5,716V525M1528.5,716V538M1529.5,716V546M1530.5,716V541M1531.5,716V535M1532.5,716V563M1533.5,716V572M1534.5,716V513M1535.5,716V557M1536.5,716V537M1537.5,716V547M1538.5,716V539M1539.5,716V553M1540.5,716V545M1541.5,716V572M1542.5,716V541M1543.5,716V517M1544.5,716V557M1545.5,716V546M1546.5,716V539M1547.5,716V545M1548.5,716V554M1549.5,716V525M1550.5,716V549M1551.5,716V554M1552.5,716V545M1553.5,716V557M1554.5,716V542M1555.5,716V546M1556.5,716V566M1557.5,716V509M1558.5,716V555M1559.5,716V540M1560.5,716V548M1561.5,716V554M1562.5,716V548M1563.5,716V562M1564.5,716V558M1565.5,716V552M1566.5,716V560M1567.5,716V549M1568.5,716V557M1569.5,716V578M1570.5,716V539M1571.5,716V556M1572.5,716V543" stroke="#fff536" stroke-width="1" shape-rendering="crispEdges"/><rect x="1476" y="600" width="97" height="116" fill="#fff536"/>
<path d="M1589.5,716V576M1590.5,716V543M1591.5,716V545M1592.5,716V562M1593.5,716V558M1594.5,716V568M1595.5,716V532M1596.5,716V540M1597.5,716V553M1598.5,716V555M1599.5,716V525M1600.5,716V540M1601.5,716V567M1602.5,716V556M1603.5,716V527M1604.5,716V505M1605.5,716V548M1606.5,716V546M1607.5,716V533M1608.5,716V550M1609.5,716V571M1610.5,716V549M1611.5,716V550M1612.5,716V534M1613.5,716V561M1614.5,716V537M1615.5,716V566M1616.5,716V531M1617.5,716V534M1618.5,716V550M1619.5,716V547M1620.5,716V556M1621.5,716V548M1622.5,716V558M1623.5,716V533M1624.5,716V559M1625.5,716V537M1626.5,716V546M1627.5,716V549M1628.5,716V551M1629.5,716V555M1630.5,716V572M1631.5,716V528M1632.5,716V562M1633.5,716V532M1634.5,716V546M1635.5,716V573M1636.5,716V536M1637.5,716V566M1638.5,716V513M1639.5,716V557M1640.5,716V542M1641.5,716V547M1642.5,716V589M1643.5,716V567M1644.5,716V554M1645.5,716V543M1646.5,716V537M1647.5,716V552M1648.5,716V577M1649.5,716V562M1650.5,716V523M1651.5,716V575M1652.5,716V553M1653.5,716V561M1654.5,716V539M1655.5,716V524M1656.5,716V559M1657.5,716V546M1658.5,716V573M1659.5,716V572M1660.5,716V565M1661.5,716V546M1662.5,716V552M1663.5,716V551M1664.5,716V557M1665.5,716V551M1666.5,716V527M1667.5,716V523M1668.5,716V560M1669.5,716V565M1670.5,716V554M1671.5,716V505M1672.5,716V548M1673.5,716V557M1674.5,716V569M1675.5,716V543M1676.5,716V551M1677.5,716V521M1678.5,716V545M1679.5,716V568M1680.5,716V548M1681.5,716V552M1682.5,716V548M1683.5,716V551M1684.5,716V546M1685.5,716V549M1686.5,716V545" stroke="#fff536" stroke-width="1" shape-rendering="crispEdges"/><rect x="1589" y="600" width="98" height="116" fill="#fff536"/>
<path d="M1724.5,716V549M1725.5,716V556M1726.5,716V536M1727.5,716V552M1728.5,716V545M1729.5,716V545M1730.5,716V542M1731.5,716V521M1732.5,716V551M1733.5,716V552M1734.5,716V550M1735.5,716V548M1736.5,716V558M1737.5,716V505M1738.5,716V565M1739.5,716V544M1740.5,716V565M1741.5,716V568M1742.5,716V512M1743.5,716V531M1744.5,716V555M1745.5,716V558M1746.5,716V550M1747.5,716V543M1748.5,716V547M1749.5,716V520M1750.5,716V538M1751.5,716V549M1752.5,716V584M1753.5,716V533M1754.5,716V569M1755.5,716V569M1756.5,716V554M1757.5,716V548M1758.5,716V518M1759.5,716V554M1760.5,716V547M1761.5,716V544M1762.5,716V541M1763.5,716V556M1764.5,716V546M1765.5,716V554M1766.5,716V560M1767.5,716V566M1768.5,716V519M1769.5,716V532M1770.5,716V542M1771.5,716V545M1772.5,716V545M1773.5,716V534M1774.5,716V576M1775.5,716V552M1776.5,716V539M1777.5,716V559M1778.5,716V540M1779.5,716V551M1780.5,716V571M1781.5,716V560M1782.5,716V537M1783.5,716V541M1784.5,716V559M1785.5,716V556M1786.5,716V550M1787.5,716V555M1788.5,716V554M1789.5,716V563M1790.5,716V577M1791.5,716V564M1792.5,716V561M1793.5,716V544M1794.5,716V553M1795.5,716V507M1796.5,716V564M1797.5,716V554M1798.5,716V516M1799.5,716V563M1800.5,716V544M1801.5,716V559M1802.5,716V561M1803.5,716V547M1804.5,716V566M1805.5,716V551M1806.5,716V544M1807.5,716V541M1808.5,716V546M1809.5,716V554M1810.5,716V525M1811.5,716V565M1812.5,716V551M1813.5,716V543M1814.5,716V552M1815.5,716V547M1816.5,716V548M1817.5,716V555M1818.5,716V542M1819.5,716V545M1820.5,716V556M1821.5,716V542M1822.5,716V546M1823.5,716V548M1824.5,716V548M1825.5,716V507M1826.5,716V539M1827.5,716V536M1828.5,716V551M1829.5,716V551M1830.5,716V553M1831.5,716V544M1832.5,716V563M1833.5,716V559M1834.5,716V553M1835.5,716V541M1836.5,716V560M1837.5,716V567M1838.5,716V542M1839.5,716V535M1840.5,716V563M1841.5,716V538M1842.5,716V539M1843.5,716V572M1844.5,716V534M1845.5,716V561M1846.5,716V554M1847.5,716V567M1848.5,716V550M1849.5,716V553M1850.5,716V525M1851.5,716V523M1852.5,716V541M1853.5,716V558M1854.5,716V577M1855.5,716V565M1856.5,716V543M1857.5,716V533M1858.5,716V542M1859.5,716V543M1860.5,716V562M1861.5,716V538M1862.5,716V548M1863.5,716V535M1864.5,716V541M1865.5,716V584M1866.5,716V560M1867.5,716V552" stroke="#fff536" stroke-width="1" shape-rendering="crispEdges"/><rect x="1724" y="600" width="144" height="116" fill="#fff536"/>
<path d="M1113.5,716V562M1114.5,716V540M1115.5,716V548M1116.5,716V565M1117.5,716V555M1118.5,716V534M1119.5,716V545M1120.5,716V550M1121.5,716V546M1122.5,716V561M1123.5,716V565M1124.5,716V543M1125.5,716V545M1126.5,716V530M1127.5,716V541M1128.5,716V556M1129.5,716V555M1130.5,716V524M1131.5,716V557M1132.5,716V560M1133.5,716V548M1134.5,716V565M1135.5,716V558M1136.5,716V521M1137.5,716V540M1138.5,716V560M1139.5,716V532M1140.5,716V570M1141.5,716V549M1142.5,716V558M1143.5,716V555M1144.5,716V522M1145.5,716V549M1146.5,716V556M1147.5,716V540M1148.5,716V539M1149.5,716V560M1150.5,716V543M1151.5,716V513M1152.5,716V560M1153.5,716V542M1154.5,716V535M1155.5,716V550M1156.5,716V541M1157.5,716V554M1158.5,716V563M1159.5,716V556M1160.5,716V554M1161.5,716V565" stroke="#8c8552" stroke-width="1" shape-rendering="crispEdges"/><rect x="1113" y="600" width="49" height="116" fill="#8c8552"/>
<path d="M1179.5,716V523M1180.5,716V560M1181.5,716V549M1182.5,716V576M1183.5,716V546M1184.5,716V564M1185.5,716V545M1186.5,716V546M1187.5,716V550M1188.5,716V546M1189.5,716V554M1190.5,716V562M1191.5,716V537M1192.5,716V548M1193.5,716V524M1194.5,716V550M1195.5,716V537M1196.5,716V541M1197.5,716V546M1198.5,716V564M1199.5,716V555M1200.5,716V534M1201.5,716V571M1202.5,716V564M1203.5,716V550M1204.5,716V555M1205.5,716V536M1206.5,716V545M1207.5,716V558M1208.5,716V528" stroke="#8c8552" stroke-width="1" shape-rendering="crispEdges"/><rect x="1179" y="600" width="30" height="116" fill="#8c8552"/>
<path d="M1868.5,716V571M1869.5,716V549M1870.5,716V556" stroke="#8c8552" stroke-width="1" shape-rendering="crispEdges"/><rect x="1868" y="600" width="3" height="116" fill="#8c8552"/>
<path d="M1887.5,716V555M1888.5,716V550M1889.5,716V546M1890.5,716V558M1891.5,716V537M1892.5,716V548M1893.5,716V564M1894.5,716V551M1895.5,716V546M1896.5,716V571M1897.5,716V551M1898.5,716V548M1899.5,716V542M1900.5,716V549M1901.5,716V544M1902.5,716V551M1903.5,716V557" stroke="#8c8552" stroke-width="1" shape-rendering="crispEdges"/><rect x="1887" y="600" width="17" height="116" fill="#8c8552"/>
<path d="M1276.5,716 V155 M1312.5,716 V158" stroke="#fff536" stroke-width="1.3" fill="none"/>
<path d="M1276,169.8 L1277,169.1 L1278,168.7 L1279,168.2 L1280,167.8 L1281,166.7 L1282,168.0 L1283,167.0 L1284,167.3 L1285,167.9 L1286,165.7 L1287,167.1 L1288,166.5 L1289,164.9 L1290,165.8 L1291,164.8 L1292,166.1 L1293,165.2 L1294,166.1 L1295,164.5 L1296,165.1 L1297,164.4 L1298,162.8 L1299,164.3 L1300,162.9 L1301,162.5 L1302,163.7 L1303,162.1 L1304,161.9 L1305,162.7 L1306,162.0 L1307,161.4 L1308,162.6 L1309,161.7 L1310,161.9 L1311,162.1 L1312,161.1 L1312,167.1 L1311,168.1 L1310,167.9 L1309,167.7 L1308,168.6 L1307,167.4 L1306,168.0 L1305,168.7 L1304,167.9 L1303,168.1 L1302,169.7 L1301,168.5 L1300,168.9 L1299,170.3 L1298,168.8 L1297,170.4 L1296,171.1 L1295,170.5 L1294,172.1 L1293,171.2 L1292,172.1 L1291,170.8 L1290,171.8 L1289,170.9 L1288,172.5 L1287,173.1 L1286,171.7 L1285,173.9 L1284,173.3 L1283,173.0 L1282,174.0 L1281,172.7 L1280,173.8 L1279,174.2 L1278,174.7 L1277,175.1 L1276,175.8 Z" fill="#fff536" stroke="#fff536" stroke-width="0.8"/>
<path d="M1687.5,716 V155 M1723.5,716 V156" stroke="#fff536" stroke-width="1.3" fill="none"/>
<path d="M1687,170.7 L1688,168.0 L1689,169.2 L1690,169.0 L1691,167.0 L1692,168.1 L1693,166.0 L1694,168.0 L1695,167.0 L1696,166.5 L1697,166.1 L1698,165.6 L1699,166.2 L1700,165.5 L1701,164.8 L1702,162.6 L1703,165.0 L1704,164.7 L1705,164.9 L1706,163.9 L1707,162.8 L1708,163.2 L1709,162.4 L1710,163.8 L1711,162.6 L1712,161.6 L1713,161.0 L1714,162.1 L1715,161.4 L1716,159.0 L1717,159.8 L1718,161.1 L1719,158.9 L1720,159.5 L1721,159.8 L1722,159.6 L1723,160.3 L1723,166.3 L1722,165.6 L1721,165.8 L1720,165.5 L1719,164.9 L1718,167.1 L1717,165.8 L1716,165.0 L1715,167.4 L1714,168.1 L1713,167.0 L1712,167.6 L1711,168.6 L1710,169.8 L1709,168.4 L1708,169.2 L1707,168.8 L1706,169.9 L1705,170.9 L1704,170.7 L1703,171.0 L1702,168.6 L1701,170.8 L1700,171.5 L1699,172.2 L1698,171.6 L1697,172.1 L1696,172.5 L1695,173.0 L1694,174.0 L1693,172.0 L1692,174.1 L1691,173.0 L1690,175.0 L1689,175.2 L1688,174.0 L1687,176.7 Z" fill="#fff536" stroke="#fff536" stroke-width="0.8"/>
<path d="M1460.5,716 V359 M1475.5,716 V356" stroke="#fff536" stroke-width="1.3" fill="none"/>
<path d="M1460,366.1 L1461,365.4 L1462,364.6 L1463,362.2 L1464,363.5 L1465,364.6 L1466,363.1 L1467,360.5 L1468,360.5 L1469,359.4 L1470,359.4 L1471,360.0 L1472,356.7 L1473,359.4 L1474,359.4 L1475,357.5 L1475,389.1 L1474,391.8 L1473,390.6 L1472,393.6 L1471,395.7 L1470,392.9 L1469,395.0 L1468,396.6 L1467,396.0 L1466,396.6 L1465,396.0 L1464,394.6 L1463,395.9 L1462,398.7 L1461,398.8 L1460,399.8 Z" fill="#fff536" stroke="#fff536" stroke-width="0.8"/>
<path d="M1573.5,716 V323 M1588.5,716 V322" stroke="#fff536" stroke-width="1.3" fill="none"/>
<path d="M1573,327.2 L1574,327.9 L1575,326.4 L1576,326.7 L1577,325.3 L1578,325.3 L1579,328.5 L1580,326.2 L1581,325.7 L1582,325.0 L1583,324.4 L1584,324.3 L1585,326.0 L1586,325.4 L1587,324.5 L1588,322.7 L1588,348.9 L1587,347.9 L1586,349.9 L1585,353.7 L1584,351.4 L1583,348.0 L1582,353.2 L1581,352.3 L1580,353.3 L1579,354.0 L1578,353.5 L1577,353.3 L1576,356.9 L1575,353.0 L1574,357.1 L1573,355.6 Z" fill="#fff536" stroke="#fff536" stroke-width="0.8"/>
<path d="M1161.5,716 V321 M1178.5,716 V322" stroke="#8c8552" stroke-width="1.3" fill="none"/>
<path d="M1161,324.1 L1162,325.5 L1163,323.0 L1164,326.3 L1165,325.8 L1166,324.1 L1167,322.4 L1168,326.1 L1169,326.9 L1170,326.0 L1171,322.5 L1172,325.4 L1173,322.6 L1174,324.0 L1175,327.0 L1176,321.8 L1177,325.2 L1178,326.2 L1178,357.5 L1177,354.5 L1176,355.2 L1175,356.9 L1174,354.8 L1173,352.2 L1172,356.7 L1171,350.8 L1170,356.9 L1169,357.2 L1168,357.1 L1167,355.4 L1166,352.1 L1165,354.0 L1164,357.8 L1163,354.6 L1162,354.4 L1161,354.2 Z" fill="#8c8552" stroke="#8c8552" stroke-width="0.8"/>
<path d="M1871.5,716 V359 M1886.5,716 V358" stroke="#8c8552" stroke-width="1.3" fill="none"/>
<path d="M1871,361.9 L1872,362.2 L1873,363.3 L1874,359.9 L1875,359.9 L1876,363.9 L1877,362.0 L1878,360.0 L1879,360.3 L1880,359.0 L1881,359.2 L1882,359.6 L1883,359.7 L1884,360.8 L1885,359.0 L1886,359.0 L1886,395.2 L1885,392.2 L1884,397.0 L1883,392.4 L1882,397.1 L1881,396.7 L1880,391.9 L1879,392.7 L1878,392.3 L1877,397.2 L1876,397.6 L1875,397.4 L1874,397.2 L1873,399.0 L1872,398.1 L1871,397.3 Z" fill="#8c8552" stroke="#8c8552" stroke-width="0.8"/>
<rect x="1167.5" y="362.5" width="41" height="118" fill="#8a8a8a" fill-opacity="0.5" stroke="#c0c0c0"/>
<path d="M1168,374 L1208,396 M1168,467 L1208,445" stroke="#d8d8d8" stroke-width="1"/>
<rect x="1869.5" y="362.5" width="36" height="118" fill="#8a8a8a" fill-opacity="0.5" stroke="#c0c0c0"/>
<path d="M1904,374 L1870,396 M1904,467 L1870,445" stroke="#d8d8d8" stroke-width="1"/>
</svg>
<div class="a" style="left:1209px;top:121px;width:659px;height:3px;background:#0000f0"></div>
<!-- DPX left controls -->
<svg style="left:6px;top:140px" width="10" height="9" viewBox="0 0 10 9"><path d="M1.5,4.5 Q1.5,1 5,1 Q8.5,1 8.5,4.5 Z" fill="#c8c8c8"/><circle cx="3.6" cy="3" r="1.6" fill="#108a10"/><circle cx="4.4" cy="3.6" r="0.8" fill="#f0f010"/><path d="M0.5,5.2 H9.5" stroke="#111" stroke-width="1.1"/><path d="M2.5,7.3 H6.5" stroke="#0a0a90" stroke-width="1.4"/></svg>
<div class="a" style="left:17px;top:134px;width:73px;height:21px;background:#fff"></div>
<div class="t s12" style="left:22px;top:137px">0.00</div>
<div class="dd" style="left:23px;top:160px;width:70px;height:19px;font-size:12px">dBm<div class="ddb"></div></div>
<svg style="left:7px;top:212px" width="10" height="9" viewBox="0 0 10 9"><path d="M1.5,4.5 Q1.5,1 5,1 Q8.5,1 8.5,4.5 Z" fill="#c8c8c8"/><circle cx="3.6" cy="3" r="1.6" fill="#108a10"/><circle cx="4.4" cy="3.6" r="0.8" fill="#f0f010"/><path d="M0.5,5.2 H9.5" stroke="#111" stroke-width="1.1"/><path d="M2.5,7.3 H6.5" stroke="#0a0a90" stroke-width="1.4"/></svg>
<div class="t s12" style="left:18px;top:202px">dB/div:</div>
<div class="a" style="left:18px;top:216px;width:73px;height:19px;background:#fff"></div>
<div class="t s12" style="left:22px;top:218px">10.0 dB</div>
<svg style="left:7px;top:255px" width="10" height="9" viewBox="0 0 10 9"><path d="M1.5,4.5 Q1.5,1 5,1 Q8.5,1 8.5,4.5 Z" fill="#c8c8c8"/><circle cx="3.6" cy="3" r="1.6" fill="#108a10"/><circle cx="4.4" cy="3.6" r="0.8" fill="#f0f010"/><path d="M0.5,5.2 H9.5" stroke="#111" stroke-width="1.1"/><path d="M2.5,7.3 H6.5" stroke="#0a0a90" stroke-width="1.4"/></svg>
<div class="t s12" style="left:19px;top:242px">RBW:</div>
<div class="a" style="left:19px;top:256px;width:73px;height:19px;background:#fff"></div>
<div class="t s12" style="left:23px;top:258px;font-style:italic">300 kHz</div>
<div class="t s12" style="left:13px;top:324px">Segments:</div>
<div class="t s12" style="left:16px;top:342px">---</div>
<div class="dd" style="left:10px;top:667px;width:85px;height:19px;font-size:12px">Spectrum<div class="ddb"></div></div>
<div class="btn" style="left:10px;top:727px;width:72px;height:22px;font-size:12px">Autoscale</div>
<!-- DPX top row -->
<svg style="left:104px;top:124px" width="12" height="8"><path d="M0,0.5 H11 L5.5,6.5 Z" fill="#9a9a9a"/><path d="M5.5,6.5 L11,0.5" stroke="#2a3a7a" stroke-width="1.2"/></svg>
<div class="t s12" style="left:120px;top:121px">Bitmap</div>
<div class="a" style="left:210px;top:120px;width:12px;height:13px;border:1px solid #3a8ad0;background:linear-gradient(#fff,#e4eef8)"></div>
<svg style="left:211px;top:121px" width="10" height="11"><path d="M2,5 L4.5,8.5 L8.5,2" stroke="#2a6fb0" stroke-width="1.4" fill="none"/></svg>
<div class="t s12" style="left:227px;top:120px">Show</div>
<div class="t s12" style="left:268px;top:121px">On</div>
<div class="btn" style="left:898px;top:118px;width:40px;height:20px;font-size:12px;line-height:18px">Clear</div>
<!-- DPX y-axis labels -->
<div class="a" style="left:60px;top:138px;width:75px;text-align:right;font-size:12px;line-height:16px">0.0</div>
<div class="a" style="left:60px;top:194px;width:75px;text-align:right;font-size:12px;line-height:16px">-10.0</div>
<div class="a" style="left:60px;top:251px;width:75px;text-align:right;font-size:12px;line-height:16px">-20.0</div>
<div class="a" style="left:60px;top:308px;width:75px;text-align:right;font-size:12px;line-height:16px">-30.0</div>
<div class="a" style="left:60px;top:365px;width:75px;text-align:right;font-size:12px;line-height:16px">-40.0</div>
<div class="a" style="left:60px;top:422px;width:75px;text-align:right;font-size:12px;line-height:16px">-50.0</div>
<div class="a" style="left:60px;top:479px;width:75px;text-align:right;font-size:12px;line-height:16px">-60.0</div>
<div class="a" style="left:60px;top:536px;width:75px;text-align:right;font-size:12px;line-height:16px">-70.0</div>
<div class="a" style="left:60px;top:593px;width:75px;text-align:right;font-size:12px;line-height:16px">-80.0</div>
<div class="a" style="left:60px;top:650px;width:75px;text-align:right;font-size:12px;line-height:16px">-90.0</div>
<div class="a" style="left:60px;top:707px;width:75px;text-align:right;font-size:12px;line-height:16px">-100.0</div>
<svg style="left:139px;top:140px" width="6" height="580"><path d="M1,5 H4 M1,62 H4 M1,119 H4 M1,176 H4 M1,233 H4 M1,290 H4 M1,347 H4 M1,404 H4 M1,461 H4 M1,518 H4 M1,575 H4" stroke="#222" stroke-width="1"/></svg>
<!-- DPX bottom -->
<div class="a" style="left:144px;top:728px;width:177px;height:18px;background:#fff"></div>
<svg style="left:148px;top:733px" width="10" height="9" viewBox="0 0 10 9"><path d="M1.5,4.5 Q1.5,1 5,1 Q8.5,1 8.5,4.5 Z" fill="#c8c8c8"/><circle cx="3.6" cy="3" r="1.6" fill="#108a10"/><circle cx="4.4" cy="3.6" r="0.8" fill="#f0f010"/><path d="M0.5,5.2 H9.5" stroke="#111" stroke-width="1.1"/><path d="M2.5,7.3 H6.5" stroke="#0a0a90" stroke-width="1.4"/></svg>
<div class="t s12" style="left:165px;top:730px">CF</div>
<div class="t s12" style="left:186px;top:730px">2.50000 GHz</div>
<svg style="left:812px;top:733px" width="10" height="9" viewBox="0 0 10 9"><path d="M1.5,4.5 Q1.5,1 5,1 Q8.5,1 8.5,4.5 Z" fill="#c8c8c8"/><circle cx="3.6" cy="3" r="1.6" fill="#108a10"/><circle cx="4.4" cy="3.6" r="0.8" fill="#f0f010"/><path d="M0.5,5.2 H9.5" stroke="#111" stroke-width="1.1"/><path d="M2.5,7.3 H6.5" stroke="#0a0a90" stroke-width="1.4"/></svg>
<div class="t s12" style="left:828px;top:730px">Span</div>
<div class="t s12" style="left:861px;top:730px">40.00 MHz</div>
<!-- DPX readout -->
<div class="t s11" style="left:159px;top:150px;color:#fff;line-height:12px">MR: 0.000 %<br>2.4875 GHz<br>-18.50 dBm</div>
<div class="t s11" style="left:288px;top:223px;color:#fff;line-height:12px">MR</div>
<svg style="left:288px;top:235px" width="15" height="15"><path d="M7.5,1 L14,7.5 L7.5,14 L1,7.5 Z" fill="#fff"/></svg>
<svg style="left:535px;top:697px" width="16" height="20"><path d="M1,1 L7.5,19 L14,1" stroke="#fff" stroke-width="1" fill="none"/></svg>

<!-- TOV left controls -->
<div class="t s12" style="left:969px;top:118px">Time:</div>
<div class="dd" style="left:969px;top:135px;width:85px;height:19px;font-size:12px">Linked<div class="ddb"></div></div>
<div class="t s12" style="left:968px;top:173px">Offset:</div>
<div class="fld" style="left:970px;top:189px;width:78px;height:20px;font-size:12px">-64.574 us</div>
<div class="t s12" style="left:968px;top:215px">Length:</div>
<div class="fld" style="left:970px;top:231px;width:78px;height:20px;font-size:12px">500.000 us</div>
<svg style="left:967px;top:295px" width="10" height="9" viewBox="0 0 10 9"><path d="M1.5,4.5 Q1.5,1 5,1 Q8.5,1 8.5,4.5 Z" fill="#c8c8c8"/><circle cx="3.6" cy="3" r="1.6" fill="#108a10"/><circle cx="4.4" cy="3.6" r="0.8" fill="#f0f010"/><path d="M0.5,5.2 H9.5" stroke="#111" stroke-width="1.1"/><path d="M2.5,7.3 H6.5" stroke="#0a0a90" stroke-width="1.4"/></svg>
<div class="t s12" style="left:978px;top:284px">dB/div:</div>
<div class="a" style="left:978px;top:299px;width:75px;height:19px;background:#fff"></div>
<div class="t s12" style="left:982px;top:300px">4.86 dB</div>
<div class="btn" style="left:968px;top:727px;width:72px;height:22px;font-size:12px">Autoscale</div>
<!-- TOV y labels -->
<div class="a" style="left:1030px;top:117px;width:70px;text-align:right;font-size:12px;line-height:16px">-2.3</div>
<div class="a" style="left:1030px;top:235px;width:70px;text-align:right;font-size:12px;line-height:16px">-12.0</div>
<div class="a" style="left:1030px;top:354px;width:70px;text-align:right;font-size:12px;line-height:16px">-21.7</div>
<div class="a" style="left:1030px;top:473px;width:70px;text-align:right;font-size:12px;line-height:16px">-31.4</div>
<div class="a" style="left:1030px;top:592px;width:70px;text-align:right;font-size:12px;line-height:16px">-41.1</div>
<div class="a" style="left:1030px;top:710px;width:70px;text-align:right;font-size:12px;line-height:16px">-50.8</div>
<svg style="left:1104px;top:120px" width="6" height="600"><path d="M1,5 H4 M1,123.5 H4 M1,242 H4 M1,360.5 H4 M1,479 H4 M1,597.5 H4" stroke="#222" stroke-width="1"/></svg>
<!-- TOV bottom -->
<svg style="left:1113px;top:737px" width="10" height="9" viewBox="0 0 10 9"><path d="M1.5,4.5 Q1.5,1 5,1 Q8.5,1 8.5,4.5 Z" fill="#c8c8c8"/><circle cx="3.6" cy="3" r="1.6" fill="#108a10"/><circle cx="4.4" cy="3.6" r="0.8" fill="#f0f010"/><path d="M0.5,5.2 H9.5" stroke="#111" stroke-width="1.1"/><path d="M2.5,7.3 H6.5" stroke="#0a0a90" stroke-width="1.4"/></svg>
<div class="t s12" style="left:1129px;top:734px">Position:</div>
<div class="t s12" style="left:1182px;top:734px">-137.393 us</div>
<svg style="left:1782px;top:737px" width="10" height="9" viewBox="0 0 10 9"><path d="M1.5,4.5 Q1.5,1 5,1 Q8.5,1 8.5,4.5 Z" fill="#c8c8c8"/><circle cx="3.6" cy="3" r="1.6" fill="#108a10"/><circle cx="4.4" cy="3.6" r="0.8" fill="#f0f010"/><path d="M0.5,5.2 H9.5" stroke="#111" stroke-width="1.1"/><path d="M2.5,7.3 H6.5" stroke="#0a0a90" stroke-width="1.4"/></svg>
<div class="t s12" style="left:1797px;top:734px">Scale:</div>
<div class="t s12" style="left:1842px;top:734px">600.000 us</div>
<div class="t" style="left:1291px;top:717px;font-size:8px;line-height:10px;color:#c00000;font-weight:bold">T</div>
<!-- TOV readouts -->
<div class="a" style="left:1123px;top:135px;width:78px;height:26px;background:rgba(22,22,22,0.92)"></div>
<div class="t s11" style="left:1125px;top:136px;color:#fff;line-height:12px">MR: -5.80 dBm<br>135.525 zs</div>
<div class="a" style="left:1753px;top:135px;width:84px;height:50px;background:#000"></div>
<div class="t s11" style="left:1756px;top:135px;color:#fff;line-height:12px">M1: -42.63 dBm<br>778.536 us<br>&#916;M1: -36.84 dB<br>778.536 us</div>
<div class="t s11" style="left:1288px;top:143px;color:#2a5ab0;line-height:12px">MR</div>
<svg style="left:1284px;top:154px" width="18" height="18"><defs><linearGradient id="dg" x1="0" y1="0" x2="1" y2="1"><stop offset="0" stop-color="#fff"/><stop offset="1" stop-color="#999"/></linearGradient></defs><path d="M9,1 L17,9 L9,17 L1,9 Z" fill="url(#dg)"/></svg>
<div class="a" style="left:1876px;top:610px;width:16px;height:13px;background:#000;color:#fff;font-size:10px;line-height:13px;text-align:center">M1</div>
<svg style="left:1891px;top:608px" width="14" height="18"><path d="M1,1 L12,9 L1,17 Z" fill="#fff" stroke="#222" stroke-width="1"/></svg>
<!-- red arrow -->
<svg style="left:1280px;top:90px" width="40" height="80" viewBox="1280 90 40 80"><path d="M1299,101 V140" stroke="#f1584a" stroke-width="10" stroke-linecap="round"/><path d="M1284,133 L1313,133 L1298,163 Z" fill="#f1584a"/></svg>

<!-- lower area -->
<div class="a" style="left:0;top:751px;width:1920px;height:7px;background:linear-gradient(#d0d0d0,#c4c4c4)"></div>
<div class="a body" style="left:1px;top:758px;width:1916px;height:174px;border:1px solid #cfcfcf;border-radius:3px"></div>
<div class="t s12" style="left:8px;top:764px">Trigger</div>
<div class="a" style="left:116px;top:763px;width:1738px;height:170px;border:1px solid #d0d0d0;border-bottom:none;border-radius:3px 3px 0 0"></div>
<div class="a" style="left:116px;top:786px;width:1732px;height:146px;border-left:1.5px solid #2f86cc;border-top:1.5px solid #2f86cc;border-right:1.5px solid #2f86cc;border-radius:3px 3px 0 0;background:#fcfcfc"></div>
<div class="a" style="left:122px;top:768px;width:42px;height:19px;border:1px solid #3a8ad0;border-bottom:none;border-radius:2px 2px 0 0;background:linear-gradient(#fbfbfb,#e6e6e6);font-size:12px;line-height:18px;text-align:center">Event</div>
<div class="a" style="left:166px;top:765px;width:87px;height:23px;border:1px solid #3a8ad0;border-bottom:none;border-radius:2px 2px 0 0;background:#fcfcfc;font-size:12px;line-height:20px;text-align:center">Time Qualified</div>
<div class="a" style="left:254px;top:768px;width:63px;height:19px;border:1px solid #3a8ad0;border-bottom:none;border-radius:2px 2px 0 0;background:linear-gradient(#fbfbfb,#e6e6e6);font-size:12px;line-height:18px;text-align:center">Advanced</div>
<div class="a" style="left:319px;top:768px;width:49px;height:19px;border:1px solid #3a8ad0;border-bottom:none;border-radius:2px 2px 0 0;background:linear-gradient(#fbfbfb,#e6e6e6);font-size:12px;line-height:18px;text-align:center">Actions</div>
<!-- radios left -->
<div class="a" style="left:11px;top:815px;width:13px;height:13px;border:1px solid #6a8aa8;border-radius:50%;background:linear-gradient(#fff,#e8eef4)"></div>
<div class="t s12" style="left:28px;top:814px">Free Run</div>
<div class="a" style="left:11px;top:850px;width:13px;height:13px;border:1px solid #6a8aa8;border-radius:50%;background:radial-gradient(#9cc4ec 28%,#fff 34%,#e8eef4)"></div>
<div class="t s12" style="left:28px;top:849px">Triggered</div>
<div class="btn" style="left:10px;top:888px;width:88px;height:31px;font-size:12px;line-height:29px">Force Trigger</div>
<!-- time qualified content -->
<div class="a" style="left:148px;top:805px;width:13px;height:13px;border:1px solid #7a7a7a;border-radius:50%;background:linear-gradient(#f4f4f4,#e4e4e4)"></div>
<div class="t s12" style="left:167px;top:805px">None</div>
<div class="a" style="left:148px;top:841px;width:13px;height:13px;border:1px solid #7a7a7a;border-radius:50%;background:linear-gradient(#f4f4f4,#e4e4e4)"></div>
<div class="t s12" style="left:167px;top:841px">Shorter</div>
<div class="a" style="left:148px;top:881px;width:13px;height:13px;border:1px solid #1a5fb4;border-radius:50%;background:radial-gradient(#fff 22%,#1a5fb4 30%)"></div>
<div class="t s12" style="left:167px;top:881px">Longer</div>
<div class="a" style="left:311px;top:841px;width:13px;height:13px;border:1px solid #7a7a7a;border-radius:50%;background:linear-gradient(#f4f4f4,#e4e4e4)"></div>
<div class="t s12" style="left:330px;top:841px">Inside</div>
<div class="a" style="left:311px;top:881px;width:13px;height:13px;border:1px solid #7a7a7a;border-radius:50%;background:linear-gradient(#f4f4f4,#e4e4e4)"></div>
<div class="t s12" style="left:330px;top:881px">Outside</div>
<svg style="left:215px;top:825px" width="275" height="90" viewBox="215 825 275 90" fill="none"><rect x="220.5" y="830.5" width="65" height="36" fill="#fff" stroke="#555" stroke-width="1"/><path d="M223.3,852.4 H239.5 V837.4 H251.6 V852.4 H280.8" stroke="#0000f0" stroke-width="1.2"/><path d="M239.5,832 V864" stroke="#111" stroke-width="1" stroke-dasharray="2.2 2"/><path d="M261.4,832 V864" stroke="#111" stroke-width="1" stroke-dasharray="2.2 2"/><text x="251.5" y="860" font-size="7.5" font-weight="bold" fill="#e00000" text-anchor="middle" font-family="Liberation Sans">T</text><path d="M240.5,862.6 H260.4" stroke="#800080" stroke-width="1.3"/><path d="M240.0,862.6 L244.5,860.0 V865.2 Z M260.9,862.6 L256.4,860.0 V865.2 Z" fill="#800080"/><rect x="220.5" y="873.5" width="65" height="36" fill="#fff" stroke="#555" stroke-width="1"/><path d="M223.3,895.2 H239.5 V880.3 H269.4 V895.2 H280.8" stroke="#0000f0" stroke-width="1.2"/><path d="M239.5,875 V907" stroke="#111" stroke-width="1" stroke-dasharray="2.2 2"/><path d="M261.4,875 V907" stroke="#111" stroke-width="1" stroke-dasharray="2.2 2"/><text x="261.4" y="901.5" font-size="7.5" font-weight="bold" fill="#e00000" text-anchor="middle" font-family="Liberation Sans">T</text><path d="M240.5,905.3 H260.4" stroke="#800080" stroke-width="1.3"/><path d="M240.0,905.3 L244.5,902.6999999999999 V907.9 Z M260.9,905.3 L256.4,902.6999999999999 V907.9 Z" fill="#800080"/><rect x="416.5" y="829.5" width="65" height="37" fill="#fff" stroke="#555" stroke-width="1"/><path d="M419.1,846.5 H426.5 V836.4 H456.4 V846.5 H476.8" stroke="#0000f0" stroke-width="1.2"/><path d="M426.5,831 V863" stroke="#111" stroke-width="1" stroke-dasharray="2.2 2"/><path d="M448.4,831 V863" stroke="#111" stroke-width="1" stroke-dasharray="2.2 2"/><path d="M466.4,835 V863" stroke="#111" stroke-width="1" stroke-dasharray="2.2 2"/><text x="456.5" y="853.5" font-size="7.5" font-weight="bold" fill="#e00000" text-anchor="middle" font-family="Liberation Sans">T</text><path d="M427.5,856.2 H447.4" stroke="#800080" stroke-width="1.3"/><path d="M427.0,856.2 L431.5,853.6 V858.8000000000001 Z M447.9,856.2 L443.4,853.6 V858.8000000000001 Z" fill="#800080"/><path d="M427.5,861.4 H465.4" stroke="#800080" stroke-width="1.3"/><path d="M427.0,861.4 L431.5,858.8 V864.0 Z M465.9,861.4 L461.4,858.8 V864.0 Z" fill="#800080"/><rect x="416.5" y="870.5" width="65" height="36" fill="#fff" stroke="#555" stroke-width="1"/><path d="M426.5,872 V904" stroke="#111" stroke-width="1" stroke-dasharray="2.2 2"/><path d="M448.4,872 V904" stroke="#111" stroke-width="1" stroke-dasharray="2.2 2"/><path d="M466.4,872 V904" stroke="#111" stroke-width="1" stroke-dasharray="2.2 2"/><path d="M419.1,887.4 H426.5 V877.2 H471.3 V887.4 H476.8 M440.4,877.2 V887.4 H471.3" stroke="#0000f0" stroke-width="1.2"/><text x="440.6" y="894" font-size="7.5" font-weight="bold" fill="#e00000" text-anchor="middle" font-family="Liberation Sans">T</text><text x="466.4" y="894" font-size="7.5" font-weight="bold" fill="#e00000" text-anchor="middle" font-family="Liberation Sans">T</text><path d="M427.5,897.3 H447.4" stroke="#800080" stroke-width="1.3"/><path d="M427.0,897.3 L431.5,894.6999999999999 V899.9 Z M447.9,897.3 L443.4,894.6999999999999 V899.9 Z" fill="#800080"/><path d="M427.5,902.4 H465.4" stroke="#800080" stroke-width="1.3"/><path d="M427.0,902.4 L431.5,899.8 V905.0 Z M465.9,902.4 L461.4,899.8 V905.0 Z" fill="#800080"/></svg>
<div class="t s12" style="left:547px;top:831px">Time 1:</div>
<div class="fld" style="left:592px;top:829px;width:100px;height:20px;font-size:12px;border-color:#b0b0b0">15.0 us</div>
<div class="btn" style="left:1870px;top:767px;width:36px;height:36px;font-size:26px;line-height:33px;font-weight:bold">&#x2715;</div>
<!-- markers row -->
<div class="a body" style="left:1px;top:934px;width:1918px;height:33px;border:1px solid #d4d4d4;border-radius:2px"></div>
<div class="t s14" style="left:4px;top:941px">Markers</div>
<div class="a" style="left:115px;top:937px;width:24px;height:24px;border:1px solid #b4b4b4;background:#fff"></div>
<svg style="left:121px;top:945px" width="12" height="8"><path d="M0,0.5 H11 L5.5,6.5 Z" fill="#aaa"/><path d="M5.5,6.5 L11,0.5" stroke="#2a3a7a" stroke-width="1.2"/></svg>
<div class="t s14" style="left:147px;top:941px">MR</div>
<div class="btn" style="left:752px;top:937px;width:81px;height:24px;font-size:14px;line-height:22px;color:#a8b8c8;border-color:#a8c8e4;background:#f4f6f8">To Center</div>
<div class="btn" style="left:843px;top:937px;width:47px;height:24px;font-size:14px;line-height:22px">Peak</div>
<div class="btn" style="left:896px;top:937px;width:28px;height:24px"></div>
<div class="btn" style="left:933px;top:937px;width:28px;height:24px"></div>
<div class="btn" style="left:969px;top:937px;width:27px;height:24px"></div>
<div class="btn" style="left:1005px;top:937px;width:28px;height:24px"></div>
<svg style="left:896px;top:937px" width="140" height="24" viewBox="896 937 140 24" fill="#fff" stroke="#111" stroke-width="1.3" stroke-linejoin="round">
<path d="M900,949 L909,941 V945 H919 V953 H909 V957 Z"/>
<path d="M956,949 L947,941 V945 H937 V953 H947 V957 Z"/>
<path d="M982.5,958 L974,949 H979 V940 H986 V949 H991 Z"/>
<path d="M1018.5,940 L1010,949 H1015 V958 H1022 V949 H1027 Z"/>
</svg>
<div class="dd" style="left:1298px;top:937px;width:111px;height:24px;font-size:14px;line-height:22px;border-color:#b0b0b0">Time<div class="ddb" style="width:14px"></div></div>
<div class="fld" style="left:1415px;top:937px;width:139px;height:24px;font-size:14px;line-height:22px;border-color:#b0b0b0">135.525 zs</div>
<div class="btn" style="left:1769px;top:937px;width:51px;height:24px;font-size:14px;line-height:22px">Table</div>
<div class="btn" style="left:1826px;top:937px;width:53px;height:24px;font-size:14px;line-height:22px">Define</div>
<div class="btn" style="left:1885px;top:937px;width:28px;height:24px;font-size:18px;line-height:22px;font-weight:bold">&#x2715;</div>
<!-- time overview row -->
<div class="a body" style="left:0;top:967px;width:1920px;height:34px"></div>
<div class="t s14" style="left:4px;top:975px">Time Overview</div>
<div class="t s14" style="left:116px;top:975px">Frequency</div>
<div class="fld" style="left:189px;top:972px;width:94px;height:23px;font-size:14px;line-height:21px;border-color:#b0b0b0">2.50000 GHz</div>
<div class="t s14" style="left:615px;top:975px">Ref Lev</div>
<div class="fld" style="left:671px;top:972px;width:94px;height:23px;font-size:14px;line-height:21px;border-color:#b0b0b0">0.00 dBm</div>
<div class="btn" style="left:1765px;top:971px;width:60px;height:24px;font-size:14px;line-height:22px">Markers</div>
<div class="btn" style="left:1830px;top:971px;width:52px;height:24px;font-size:14px;line-height:22px">Traces</div>
<div class="btn" style="left:1886px;top:971px;width:26px;height:24px"></div>
<svg style="left:1887px;top:971px" width="24" height="24"><g transform="translate(12,12)"><circle r="7.8" stroke="#111" stroke-width="4.5" stroke-dasharray="3.7 2.4" fill="none"/><circle r="6" stroke="#111" stroke-width="3.6" fill="none"/></g></svg>
<!-- status bar -->
<div class="a" style="left:0;top:1001px;width:1920px;height:27px;border-top:2px solid #2f8ad0;background:linear-gradient(#fdfdfd,#e0e0e0)"></div>
<svg style="left:0;top:1003px" width="840" height="25"><path d="M97.5,2 V25 M376.5,2 V25 M443.5,2 V25 M548.5,2 V25 M618.5,2 V25 M698.5,2 V25 M778.5,2 V25 M833.5,2 V25" stroke="#c8c8c8" stroke-width="1"/></svg>
<div class="t s12" style="left:8px;top:1008px">Stopped</div>
<div class="t" style="left:104px;top:1008px;font-size:11.4px">Acq BW: 40.00 MHz, Acq Length: 660.089 us</div>
<div class="t" style="left:383px;top:1008px;font-size:11.4px">Real Time</div>
<div class="t" style="left:450px;top:1008px;font-size:11.4px">Power</div>
<div class="t" style="left:555px;top:1008px;font-size:11.4px">Ref: Int</div>
<div class="t" style="left:625px;top:1008px;font-size:11.4px">Atten: 20 dB</div>
<div class="t" style="left:705px;top:1008px;font-size:11.4px">Preamp: Off</div>
<svg style="left:1852px;top:1007px" width="12" height="17"><rect x="1" y="3" width="10" height="13" rx="1" fill="#2a8a3a" stroke="#111" stroke-width="1"/><rect x="4" y="1" width="4" height="2" fill="#111"/><path d="M7,5 L4,10 H6.5 L5,14 L8.5,8 H6 Z" fill="#fff"/></svg>
<svg style="left:1889px;top:1008px" width="17" height="15"><path d="M2,13 C3,5 9,1 15,2 C14,9 9,13 2,13 Z" fill="#4aaa4a" stroke="#222" stroke-width="1"/><path d="M1,14 L15,2" stroke="#222" stroke-width="0.8"/></svg>

</body></html>
